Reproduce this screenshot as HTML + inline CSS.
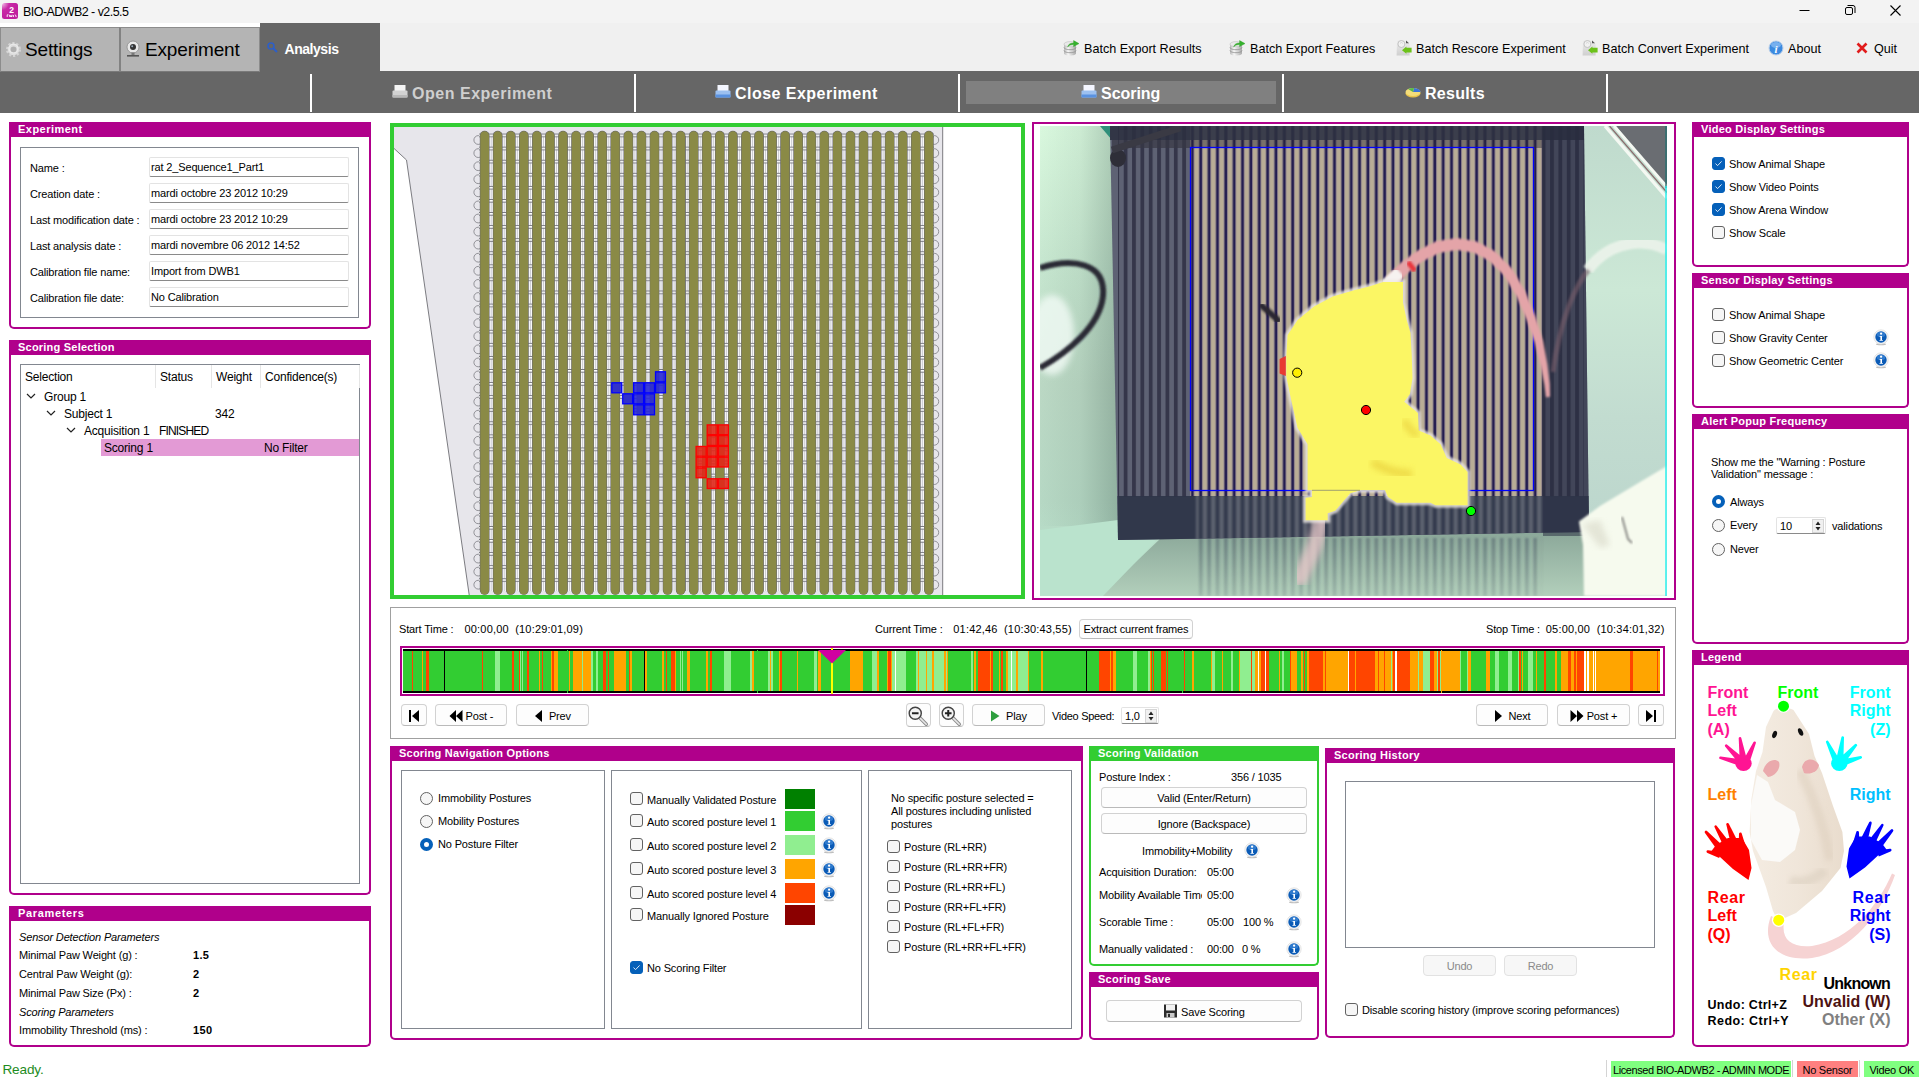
<!DOCTYPE html><html><head><meta charset="utf-8"><title>BIO-ADWB2 - v2.5.5</title><style>
*{box-sizing:border-box;margin:0;padding:0}
html,body{width:1919px;height:1077px;overflow:hidden;background:#fff}
body{position:relative;font-family:"Liberation Sans",sans-serif;font-size:11px;color:#000;letter-spacing:-.15px}
svg text{letter-spacing:0}
.a{position:absolute}
.t{position:absolute;white-space:nowrap;line-height:14px;height:14px}
.pn{position:absolute;border:2px solid #b0008b;border-top:0;border-radius:0 0 5px 5px;background:#fff}
.ph{position:absolute;background:#b0008b;color:#fff;font-weight:bold;font-size:11px;line-height:14px;padding-left:9px;white-space:nowrap;letter-spacing:.26px}
.bx{position:absolute;border:1px solid #828790;background:#fff}
.fd{position:absolute;border:1px solid #e3e3e3;border-bottom-color:#8a8a8a;background:#fff;border-radius:2px;line-height:19px;padding-left:1px;white-space:nowrap}
.bt{position:absolute;border:1px solid #d2d2d2;border-bottom-color:#bababa;border-radius:4px;background:#fdfdfd;text-align:center;white-space:nowrap;padding-top:1px}
.cb{position:absolute;width:13px;height:13px;border:1px solid #626262;border-radius:3px;background:#f6f6f6}
.cb.on{background:#0560b9;border-color:#0560b9}
.rd{position:absolute;width:13px;height:13px;border:1px solid #626262;border-radius:50%;background:#f6f6f6}
.rd.on{border:4px solid #0560b9;background:#fff}
.b{font-weight:bold}.i{font-style:italic}
.tr{font-size:12px;line-height:16px;height:16px;letter-spacing:-.2px}
</style></head><body>
<div class="a" style="left:0;top:0;width:1919px;height:23px;background:#f3f3f3"></div>
<svg class="a" style="left:2px;top:3px" width="17" height="17" viewBox="0 0 17 17"><defs><radialGradient id="ai" cx="0" cy="0" r="1"><stop offset="0" stop-color="#f4c6ea"/><stop offset=".45" stop-color="#c92aa6"/><stop offset="1" stop-color="#c01f9f"/></radialGradient></defs><rect x="0" y="0" width="16" height="16" rx="2.5" fill="url(#ai)"/><text x="9.6" y="10" font-family="Liberation Sans,sans-serif" font-weight="bold" font-size="8.5" fill="#fff" text-anchor="middle">2</text><path d="M5.2 14V11.8H6.4M7.4 11.8L8 14L8.8 12.4L9.6 14L10.2 11.8M11.4 14V12M12.8 11.8L14 12.6V14" stroke="#fff" stroke-width=".9" fill="none"/></svg>
<div class="t " style="left:23px;top:4.5px;font-size:12.5px;line-height:14px;letter-spacing:-.55px">BIO-ADWB2 - v2.5.5</div>
<svg class="a" style="left:1780px;top:0" width="139" height="23" viewBox="0 0 139 23"><path d="M19.5 10.5h10" stroke="#000" stroke-width="1"/><rect x="65.5" y="7.5" width="7" height="7" rx="1.5" fill="none" stroke="#000"/><path d="M67.5 5.5h5.5a2 2 0 0 1 2 2v5.5" fill="none" stroke="#000"/><path d="M110.5 5.5l10 10M120.5 5.5l-10 10" stroke="#000" stroke-width="1.1"/></svg>
<div class="a" style="left:0;top:23px;width:1919px;height:49px;background:#f0f0f0"></div>
<div class="a" style="left:0;top:71px;width:1919px;height:42px;background:#666"></div>
<div class="a" style="left:0;top:23px;width:260px;height:4px;background:#fff"></div>
<div class="a" style="left:0;top:27px;width:120px;height:45px;background:#b4b4b4;border:1px solid #8c8c8c;border-bottom-color:#7a7a7a"></div>
<div class="a" style="left:119px;top:27px;width:141px;height:45px;background:#b4b4b4;border:1px solid #8c8c8c;border-bottom-color:#7a7a7a;border-left-width:2px;border-left-color:#828282"></div>
<div class="a" style="left:260px;top:23px;width:120px;height:50px;background:#666"></div>
<svg class="a" style="left:4.5px;top:41px" width="17" height="17" viewBox="0 0 17 17"><circle cx="8.5" cy="8.5" r="6" fill="none" stroke="#d4d4d4" stroke-width="3" stroke-dasharray="2.1 1.67"/><circle cx="8.5" cy="8.5" r="4.4" fill="none" stroke="#dedede" stroke-width="2.8"/><circle cx="8.5" cy="7.6" r="4.4" fill="none" stroke="#ececec" stroke-width="1.2" opacity=".8"/><circle cx="8.5" cy="8.5" r="2.5" fill="#b0b0b0"/></svg>
<div class="t " style="left:25px;top:43.5px;font-size:19px;line-height:24px;height:24px;top:38px">Settings</div>
<svg class="a" style="left:125px;top:40px" width="16" height="18" viewBox="0 0 16 18"><circle cx="8" cy="7" r="6" fill="#e8e8e8" stroke="#8a8a8a" stroke-width=".8"/><circle cx="8" cy="7" r="3" fill="#333"/><circle cx="7.2" cy="6.2" r="1" fill="#9ab"/><rect x="6.5" y="12.5" width="3" height="2.5" fill="#777"/><rect x="2" y="15" width="12" height="1.6" fill="#555"/></svg>
<div class="t " style="left:145px;top:43.5px;font-size:19px;line-height:24px;height:24px;top:38px">Experiment</div>
<svg class="a" style="left:266px;top:41px" width="13" height="13" viewBox="0 0 13 13"><circle cx="5" cy="5" r="3" fill="none" stroke="#2d5fc8" stroke-width="1.6"/><path d="M7.2 7.2L11 11" stroke="#2d5fc8" stroke-width="2"/></svg>
<div class="t b" style="left:284.5px;top:42px;font-size:14px;color:#fff;line-height:18px;height:18px;top:40px;letter-spacing:-.45px">Analysis</div>
<svg class="a" style="left:1063px;top:40px" width="17" height="16" viewBox="0 0 17 16"><defs><linearGradient id="cyl" x1="0" y1="0" x2="1" y2="0"><stop offset="0" stop-color="#b9b9b9"/><stop offset=".35" stop-color="#f6f6f6"/><stop offset="1" stop-color="#a9a9a9"/></linearGradient></defs><path d="M1 4.2v9c0 1.3 2.6 2.3 6 2.3s6-1 6-2.3v-9" fill="url(#cyl)"/><ellipse cx="7" cy="4.2" rx="6" ry="2.6" fill="#e9e9e9" stroke="#b5b5b5" stroke-width=".5"/><path d="M1 7.4c0 1.3 2.6 2.3 6 2.3s6-1 6-2.3M1 10.4c0 1.3 2.6 2.3 6 2.3s6-1 6-2.3" fill="none" stroke="#8f8f8f" stroke-width=".8"/><path d="M4.6 7C5.2 4.4 7.4 3 10.6 3V0.6L16 3.6L10.6 6.6V4.6C8 4.6 6.2 5.4 4.6 7z" fill="#35b22d" stroke="#2a9a24" stroke-width=".4"/></svg>
<div class="t " style="left:1084px;top:41.5px;font-size:12.6px;letter-spacing:0">Batch Export Results</div>
<svg class="a" style="left:1229px;top:40px" width="17" height="16" viewBox="0 0 17 16"><path d="M1 4.2v9c0 1.3 2.6 2.3 6 2.3s6-1 6-2.3v-9" fill="url(#cyl)"/><ellipse cx="7" cy="4.2" rx="6" ry="2.6" fill="#e9e9e9" stroke="#b5b5b5" stroke-width=".5"/><path d="M1 7.4c0 1.3 2.6 2.3 6 2.3s6-1 6-2.3M1 10.4c0 1.3 2.6 2.3 6 2.3s6-1 6-2.3" fill="none" stroke="#8f8f8f" stroke-width=".8"/><path d="M4.6 7C5.2 4.4 7.4 3 10.6 3V0.6L16 3.6L10.6 6.6V4.6C8 4.6 6.2 5.4 4.6 7z" fill="#35b22d" stroke="#2a9a24" stroke-width=".4"/></svg>
<div class="t " style="left:1250px;top:41.5px;font-size:12.6px;letter-spacing:0">Batch Export Features</div>
<svg class="a" style="left:1396px;top:40px" width="16" height="16" viewBox="0 0 16 16"><defs><linearGradient id="doc" x1="0" y1="0" x2="0" y2="1"><stop offset="0" stop-color="#ededed"/><stop offset="1" stop-color="#cfcfcf"/></linearGradient></defs><path d="M1 0.6H10.2L13.6 4V15.6H0.6z" fill="url(#doc)"/><path d="M10 0.4L13 3.2H10z" fill="#555"/><circle cx="5.4" cy="4" r="3.5" fill="#f1f1f1" stroke="#bdbdbd" stroke-width=".9"/><path d="M4 3.4L5.4 2.4L6.8 3.4" stroke="#c9c9c9" stroke-width=".7" fill="none"/><path d="M15.6 7.7H10.4V6.6L6 10.3L10.4 13.8V12.4H15.6z" fill="#6cc21a"/></svg>
<div class="t " style="left:1416px;top:41.5px;font-size:12.6px;letter-spacing:0">Batch Rescore Experiment</div>
<svg class="a" style="left:1582px;top:40px" width="16" height="16" viewBox="0 0 16 16"><path d="M1 0.6H10.2L13.6 4V15.6H0.6z" fill="url(#doc)"/><path d="M10 0.4L13 3.2H10z" fill="#555"/><circle cx="5.4" cy="4" r="3.5" fill="#f1f1f1" stroke="#bdbdbd" stroke-width=".9"/><path d="M4 3.4L5.4 2.4L6.8 3.4" stroke="#c9c9c9" stroke-width=".7" fill="none"/><path d="M15.6 7.7H10.4V6.6L6 10.3L10.4 13.8V12.4H15.6z" fill="#6cc21a"/></svg>
<div class="t " style="left:1602px;top:41.5px;font-size:12.6px;letter-spacing:0">Batch Convert Experiment</div>
<svg class="a" style="left:1768px;top:40px" width="16" height="16" viewBox="0 0 16 16"><circle cx="8" cy="8" r="7" fill="#3c8ae0" stroke="#b9cfea" stroke-width="1"/><ellipse cx="8" cy="5" rx="5" ry="3" fill="#8fc0f5" opacity=".7"/><text x="8" y="12.5" font-family="Liberation Serif,serif" font-style="italic" font-weight="bold" font-size="11" fill="#fff" text-anchor="middle">i</text></svg>
<div class="t " style="left:1788px;top:41.5px;font-size:12.6px;letter-spacing:0">About</div>
<svg class="a" style="left:1856px;top:42px" width="12" height="12" viewBox="0 0 12 12"><path d="M1.5 1.5l9 9M10.5 1.5l-9 9" stroke="#e11b1b" stroke-width="2.6"/></svg>
<div class="t " style="left:1874px;top:41.5px;font-size:12.6px;letter-spacing:0">Quit</div>
<div class="a" style="left:310px;top:74px;width:2px;height:38px;background:#fff"></div>
<div class="a" style="left:634px;top:74px;width:2px;height:38px;background:#fff"></div>
<div class="a" style="left:958px;top:74px;width:2px;height:38px;background:#fff"></div>
<div class="a" style="left:1282px;top:74px;width:2px;height:38px;background:#fff"></div>
<div class="a" style="left:1606px;top:74px;width:2px;height:38px;background:#fff"></div>
<div class="a" style="left:966px;top:81px;width:310px;height:23px;background:#808080"></div>
<svg class="a" style="left:392px;top:85px" width="16" height="14" viewBox="0 0 16 14"><rect x="2.5" y="0" width="11" height="7" fill="#f4f4f4"/><rect x="0.5" y="5.5" width="15" height="7" rx="1" fill="#d2d2d2"/><rect x="0.5" y="10" width="15" height="2.5" fill="#b8b8b8"/></svg>
<div class="t" style="left:412px;top:82px;font-weight:bold;font-size:16px;line-height:24px;height:24px;color:#cfcfcf;letter-spacing:.52px">Open Experiment</div>
<svg class="a" style="left:715px;top:85px" width="16" height="14" viewBox="0 0 16 14"><rect x="2.5" y="0" width="11" height="7" fill="#f4f6ff"/><rect x="0.5" y="5.5" width="15" height="7" rx="1" fill="#9cc0f0"/><rect x="0.5" y="9.5" width="15" height="3" fill="#5a92e0"/></svg>
<div class="t" style="left:735px;top:82px;font-weight:bold;font-size:16px;line-height:24px;height:24px;color:#fff;letter-spacing:.47px">Close Experiment</div>
<svg class="a" style="left:1081px;top:85px" width="16" height="14" viewBox="0 0 16 14"><rect x="2.5" y="0" width="11" height="7" fill="#f4f6ff"/><rect x="0.5" y="5.5" width="15" height="7" rx="1" fill="#9cc0f0"/><rect x="0.5" y="9.5" width="15" height="3" fill="#5a92e0"/></svg>
<div class="t" style="left:1101px;top:82px;font-weight:bold;font-size:16px;line-height:24px;height:24px;color:#fff;letter-spacing:-.03px">Scoring</div>
<svg class="a" style="left:1405px;top:87px" width="16" height="12" viewBox="0 0 16 12"><ellipse cx="8" cy="6.5" rx="7.5" ry="4" fill="#e8c24a"/><ellipse cx="8" cy="5" rx="7.5" ry="4" fill="#f4dd7a"/><path d="M8 5L15.5 5A7.5 4 0 0 0 9 1z" fill="#3d74d8"/><path d="M8 5L9 1A7.5 4 0 0 0 3 2z" fill="#58b84a"/></svg>
<div class="t" style="left:1425px;top:82px;font-weight:bold;font-size:16px;line-height:24px;height:24px;color:#fff;letter-spacing:.3px">Results</div>
<div class="pn" style="left:9px;top:122px;width:362px;height:207px;border-color:#b0008b"></div>
<div class="ph" style="left:9px;top:122px;width:362px;height:15px;background:#b0008b;letter-spacing:0.48px">Experiment</div>
<div class="bx" style="left:20px;top:147px;width:339px;height:171px;"></div>
<div class="t " style="left:30px;top:161px;">Name :</div>
<div class="fd" style="left:149px;top:157px;width:200px;height:20px">rat 2_Sequence1_Part1</div>
<div class="t " style="left:30px;top:187px;">Creation date :</div>
<div class="fd" style="left:149px;top:183px;width:200px;height:20px">mardi octobre 23 2012 10:29</div>
<div class="t " style="left:30px;top:213px;">Last modification date :</div>
<div class="fd" style="left:149px;top:209px;width:200px;height:20px">mardi octobre 23 2012 10:29</div>
<div class="t " style="left:30px;top:239px;">Last analysis date :</div>
<div class="fd" style="left:149px;top:235px;width:200px;height:20px">mardi novembre 06 2012 14:52</div>
<div class="t " style="left:30px;top:265px;">Calibration file name:</div>
<div class="fd" style="left:149px;top:261px;width:200px;height:20px">Import from DWB1</div>
<div class="t " style="left:30px;top:291px;">Calibration file date:</div>
<div class="fd" style="left:149px;top:287px;width:200px;height:20px">No Calibration</div>
<div class="pn" style="left:9px;top:340px;width:362px;height:555px;border-color:#b0008b"></div>
<div class="ph" style="left:9px;top:340px;width:362px;height:15px;background:#b0008b;letter-spacing:0.22px">Scoring Selection</div>
<div class="bx" style="left:20px;top:364px;width:340px;height:520px;"></div>
<div class="a" style="left:155px;top:365px;width:1px;height:23px;background:#e5e5e5"></div>
<div class="a" style="left:211px;top:365px;width:1px;height:23px;background:#e5e5e5"></div>
<div class="a" style="left:260px;top:365px;width:1px;height:23px;background:#e5e5e5"></div>
<div class="a" style="left:359px;top:365px;width:1px;height:23px;background:#e5e5e5"></div>
<div class="t tr" style="left:25px;top:370px;top:369px">Selection</div>
<div class="t tr" style="left:160px;top:370px;top:369px">Status</div>
<div class="t tr" style="left:216px;top:370px;top:369px">Weight</div>
<div class="t tr" style="left:265px;top:370px;top:369px">Confidence(s)</div>
<svg class="a" style="left:26px;top:393px" width="10" height="7" viewBox="0 0 10 7"><path d="M1 1l4 4l4-4" fill="none" stroke="#222" stroke-width="1.2"/></svg>
<div class="t tr" style="left:44px;top:390px;top:389px">Group 1</div>
<svg class="a" style="left:46px;top:410px" width="10" height="7" viewBox="0 0 10 7"><path d="M1 1l4 4l4-4" fill="none" stroke="#222" stroke-width="1.2"/></svg>
<div class="t tr" style="left:64px;top:407px;top:406px">Subject 1</div>
<div class="t tr" style="left:215px;top:407px;top:406px">342</div>
<svg class="a" style="left:66px;top:427px" width="10" height="7" viewBox="0 0 10 7"><path d="M1 1l4 4l4-4" fill="none" stroke="#222" stroke-width="1.2"/></svg>
<div class="t tr" style="left:84px;top:424px;top:423px">Acquisition 1</div>
<div class="t tr" style="left:159px;top:424px;top:423px;letter-spacing:-.85px">FINISHED</div>
<div class="a" style="left:101px;top:439px;width:258px;height:17px;background:#e39ad5"></div>
<div class="t tr" style="left:104px;top:441px;top:440px">Scoring 1</div>
<div class="t tr" style="left:264px;top:441px;top:440px">No Filter</div>
<div class="pn" style="left:9px;top:906px;width:362px;height:141px;border-color:#b0008b"></div>
<div class="ph" style="left:9px;top:906px;width:362px;height:15px;background:#b0008b;letter-spacing:0.66px">Parameters</div>
<div class="t i" style="left:19px;top:930px;">Sensor Detection Parameters</div>
<div class="t " style="left:19px;top:948px;">Minimal Paw Weight (g) :</div>
<div class="t b" style="left:193px;top:948px;letter-spacing:.35px">1.5</div>
<div class="t " style="left:19px;top:967px;">Central Paw Weight (g):</div>
<div class="t b" style="left:193px;top:967px;">2</div>
<div class="t " style="left:19px;top:986px;">Minimal Paw Size (Px) :</div>
<div class="t b" style="left:193px;top:986px;">2</div>
<div class="t i" style="left:19px;top:1005px;">Scoring Parameters</div>
<div class="t " style="left:19px;top:1023px;">Immobility Threshold (ms) :</div>
<div class="t b" style="left:193px;top:1023px;letter-spacing:.35px">150</div>
<div class="t " style="left:2.4px;top:1063px;font-size:13.6px;color:#1e8c1e;line-height:16px;height:16px;top:1062px">Ready.</div>
<div class="a" style="left:1606px;top:1060px;width:1px;height:17px;background:#d4d4d4"></div>
<div class="a" style="left:1792px;top:1060px;width:1px;height:17px;background:#d4d4d4"></div>
<div class="a" style="left:1859px;top:1060px;width:1px;height:17px;background:#d4d4d4"></div>
<div class="a" style="left:1611px;top:1061px;width:180px;height:16px;background:#80ff80;line-height:18px;padding-left:2px;white-space:nowrap;letter-spacing:-.43px">Licensed BIO-ADWB2 - ADMIN MODE</div>
<div class="a" style="left:1797px;top:1061px;width:61px;height:16px;background:#ff8080;line-height:18px;padding-left:5.5px;white-space:nowrap;letter-spacing:-.25px">No Sensor</div>
<div class="a" style="left:1864px;top:1061px;width:55px;height:16px;background:#80ff80;line-height:18px;padding-left:5.5px;white-space:nowrap;letter-spacing:-.3px">Video OK</div>
<div class="a" style="left:390px;top:123px;width:635px;height:476px;border:4px solid #32cd32;background:#fff"></div>
<svg class="a" style="left:394px;top:127px" width="627" height="468" viewBox="394 127 627 468"><defs><pattern id="hl" x="0" y="133.6" width="13" height="13.08" patternUnits="userSpaceOnUse"><rect x="0" y="0" width="13" height=".9" fill="#6c6c74"/><rect x="0" y=".9" width="13" height="1.7" fill="#fff"/><rect x="0" y="2.6" width="13" height=".9" fill="#6c6c74"/></pattern></defs><path d="M390 126H942.7V597H469.5L406.5 160L393 147.5z" fill="#e7e6eb" stroke="#6e6e74" stroke-width=".9"/><circle cx="478.3" cy="140.0" r="4.4" fill="#e7e6eb" stroke="#6e6e74" stroke-width=".7"/><circle cx="934.3" cy="140.0" r="4.4" fill="#e7e6eb" stroke="#6e6e74" stroke-width=".7"/><circle cx="478.3" cy="153.1" r="4.4" fill="#e7e6eb" stroke="#6e6e74" stroke-width=".7"/><circle cx="934.3" cy="153.1" r="4.4" fill="#e7e6eb" stroke="#6e6e74" stroke-width=".7"/><circle cx="478.3" cy="166.2" r="4.4" fill="#e7e6eb" stroke="#6e6e74" stroke-width=".7"/><circle cx="934.3" cy="166.2" r="4.4" fill="#e7e6eb" stroke="#6e6e74" stroke-width=".7"/><circle cx="478.3" cy="179.2" r="4.4" fill="#e7e6eb" stroke="#6e6e74" stroke-width=".7"/><circle cx="934.3" cy="179.2" r="4.4" fill="#e7e6eb" stroke="#6e6e74" stroke-width=".7"/><circle cx="478.3" cy="192.3" r="4.4" fill="#e7e6eb" stroke="#6e6e74" stroke-width=".7"/><circle cx="934.3" cy="192.3" r="4.4" fill="#e7e6eb" stroke="#6e6e74" stroke-width=".7"/><circle cx="478.3" cy="205.4" r="4.4" fill="#e7e6eb" stroke="#6e6e74" stroke-width=".7"/><circle cx="934.3" cy="205.4" r="4.4" fill="#e7e6eb" stroke="#6e6e74" stroke-width=".7"/><circle cx="478.3" cy="218.5" r="4.4" fill="#e7e6eb" stroke="#6e6e74" stroke-width=".7"/><circle cx="934.3" cy="218.5" r="4.4" fill="#e7e6eb" stroke="#6e6e74" stroke-width=".7"/><circle cx="478.3" cy="231.6" r="4.4" fill="#e7e6eb" stroke="#6e6e74" stroke-width=".7"/><circle cx="934.3" cy="231.6" r="4.4" fill="#e7e6eb" stroke="#6e6e74" stroke-width=".7"/><circle cx="478.3" cy="244.6" r="4.4" fill="#e7e6eb" stroke="#6e6e74" stroke-width=".7"/><circle cx="934.3" cy="244.6" r="4.4" fill="#e7e6eb" stroke="#6e6e74" stroke-width=".7"/><circle cx="478.3" cy="257.7" r="4.4" fill="#e7e6eb" stroke="#6e6e74" stroke-width=".7"/><circle cx="934.3" cy="257.7" r="4.4" fill="#e7e6eb" stroke="#6e6e74" stroke-width=".7"/><circle cx="478.3" cy="270.8" r="4.4" fill="#e7e6eb" stroke="#6e6e74" stroke-width=".7"/><circle cx="934.3" cy="270.8" r="4.4" fill="#e7e6eb" stroke="#6e6e74" stroke-width=".7"/><circle cx="478.3" cy="283.9" r="4.4" fill="#e7e6eb" stroke="#6e6e74" stroke-width=".7"/><circle cx="934.3" cy="283.9" r="4.4" fill="#e7e6eb" stroke="#6e6e74" stroke-width=".7"/><circle cx="478.3" cy="297.0" r="4.4" fill="#e7e6eb" stroke="#6e6e74" stroke-width=".7"/><circle cx="934.3" cy="297.0" r="4.4" fill="#e7e6eb" stroke="#6e6e74" stroke-width=".7"/><circle cx="478.3" cy="310.0" r="4.4" fill="#e7e6eb" stroke="#6e6e74" stroke-width=".7"/><circle cx="934.3" cy="310.0" r="4.4" fill="#e7e6eb" stroke="#6e6e74" stroke-width=".7"/><circle cx="478.3" cy="323.1" r="4.4" fill="#e7e6eb" stroke="#6e6e74" stroke-width=".7"/><circle cx="934.3" cy="323.1" r="4.4" fill="#e7e6eb" stroke="#6e6e74" stroke-width=".7"/><circle cx="478.3" cy="336.2" r="4.4" fill="#e7e6eb" stroke="#6e6e74" stroke-width=".7"/><circle cx="934.3" cy="336.2" r="4.4" fill="#e7e6eb" stroke="#6e6e74" stroke-width=".7"/><circle cx="478.3" cy="349.3" r="4.4" fill="#e7e6eb" stroke="#6e6e74" stroke-width=".7"/><circle cx="934.3" cy="349.3" r="4.4" fill="#e7e6eb" stroke="#6e6e74" stroke-width=".7"/><circle cx="478.3" cy="362.4" r="4.4" fill="#e7e6eb" stroke="#6e6e74" stroke-width=".7"/><circle cx="934.3" cy="362.4" r="4.4" fill="#e7e6eb" stroke="#6e6e74" stroke-width=".7"/><circle cx="478.3" cy="375.4" r="4.4" fill="#e7e6eb" stroke="#6e6e74" stroke-width=".7"/><circle cx="934.3" cy="375.4" r="4.4" fill="#e7e6eb" stroke="#6e6e74" stroke-width=".7"/><circle cx="478.3" cy="388.5" r="4.4" fill="#e7e6eb" stroke="#6e6e74" stroke-width=".7"/><circle cx="934.3" cy="388.5" r="4.4" fill="#e7e6eb" stroke="#6e6e74" stroke-width=".7"/><circle cx="478.3" cy="401.6" r="4.4" fill="#e7e6eb" stroke="#6e6e74" stroke-width=".7"/><circle cx="934.3" cy="401.6" r="4.4" fill="#e7e6eb" stroke="#6e6e74" stroke-width=".7"/><circle cx="478.3" cy="414.7" r="4.4" fill="#e7e6eb" stroke="#6e6e74" stroke-width=".7"/><circle cx="934.3" cy="414.7" r="4.4" fill="#e7e6eb" stroke="#6e6e74" stroke-width=".7"/><circle cx="478.3" cy="427.8" r="4.4" fill="#e7e6eb" stroke="#6e6e74" stroke-width=".7"/><circle cx="934.3" cy="427.8" r="4.4" fill="#e7e6eb" stroke="#6e6e74" stroke-width=".7"/><circle cx="478.3" cy="440.8" r="4.4" fill="#e7e6eb" stroke="#6e6e74" stroke-width=".7"/><circle cx="934.3" cy="440.8" r="4.4" fill="#e7e6eb" stroke="#6e6e74" stroke-width=".7"/><circle cx="478.3" cy="453.9" r="4.4" fill="#e7e6eb" stroke="#6e6e74" stroke-width=".7"/><circle cx="934.3" cy="453.9" r="4.4" fill="#e7e6eb" stroke="#6e6e74" stroke-width=".7"/><circle cx="478.3" cy="467.0" r="4.4" fill="#e7e6eb" stroke="#6e6e74" stroke-width=".7"/><circle cx="934.3" cy="467.0" r="4.4" fill="#e7e6eb" stroke="#6e6e74" stroke-width=".7"/><circle cx="478.3" cy="480.1" r="4.4" fill="#e7e6eb" stroke="#6e6e74" stroke-width=".7"/><circle cx="934.3" cy="480.1" r="4.4" fill="#e7e6eb" stroke="#6e6e74" stroke-width=".7"/><circle cx="478.3" cy="493.2" r="4.4" fill="#e7e6eb" stroke="#6e6e74" stroke-width=".7"/><circle cx="934.3" cy="493.2" r="4.4" fill="#e7e6eb" stroke="#6e6e74" stroke-width=".7"/><circle cx="478.3" cy="506.2" r="4.4" fill="#e7e6eb" stroke="#6e6e74" stroke-width=".7"/><circle cx="934.3" cy="506.2" r="4.4" fill="#e7e6eb" stroke="#6e6e74" stroke-width=".7"/><circle cx="478.3" cy="519.3" r="4.4" fill="#e7e6eb" stroke="#6e6e74" stroke-width=".7"/><circle cx="934.3" cy="519.3" r="4.4" fill="#e7e6eb" stroke="#6e6e74" stroke-width=".7"/><circle cx="478.3" cy="532.4" r="4.4" fill="#e7e6eb" stroke="#6e6e74" stroke-width=".7"/><circle cx="934.3" cy="532.4" r="4.4" fill="#e7e6eb" stroke="#6e6e74" stroke-width=".7"/><circle cx="478.3" cy="545.5" r="4.4" fill="#e7e6eb" stroke="#6e6e74" stroke-width=".7"/><circle cx="934.3" cy="545.5" r="4.4" fill="#e7e6eb" stroke="#6e6e74" stroke-width=".7"/><circle cx="478.3" cy="558.6" r="4.4" fill="#e7e6eb" stroke="#6e6e74" stroke-width=".7"/><circle cx="934.3" cy="558.6" r="4.4" fill="#e7e6eb" stroke="#6e6e74" stroke-width=".7"/><circle cx="478.3" cy="571.6" r="4.4" fill="#e7e6eb" stroke="#6e6e74" stroke-width=".7"/><circle cx="934.3" cy="571.6" r="4.4" fill="#e7e6eb" stroke="#6e6e74" stroke-width=".7"/><circle cx="478.3" cy="584.7" r="4.4" fill="#e7e6eb" stroke="#6e6e74" stroke-width=".7"/><circle cx="934.3" cy="584.7" r="4.4" fill="#e7e6eb" stroke="#6e6e74" stroke-width=".7"/><rect x="489.40" y="136" width="3.56" height="455" fill="#fdfdfe" opacity=".75"/><rect x="490.75" y="136" width=".85" height="455" fill="#c4c4cc"/><rect x="502.46" y="136" width="3.56" height="455" fill="#fdfdfe" opacity=".75"/><rect x="503.81" y="136" width=".85" height="455" fill="#c4c4cc"/><rect x="515.53" y="136" width="3.56" height="455" fill="#fdfdfe" opacity=".75"/><rect x="516.88" y="136" width=".85" height="455" fill="#c4c4cc"/><rect x="528.60" y="136" width="3.56" height="455" fill="#fdfdfe" opacity=".75"/><rect x="529.95" y="136" width=".85" height="455" fill="#c4c4cc"/><rect x="541.66" y="136" width="3.56" height="455" fill="#fdfdfe" opacity=".75"/><rect x="543.01" y="136" width=".85" height="455" fill="#c4c4cc"/><rect x="554.73" y="136" width="3.56" height="455" fill="#fdfdfe" opacity=".75"/><rect x="556.08" y="136" width=".85" height="455" fill="#c4c4cc"/><rect x="567.79" y="136" width="3.56" height="455" fill="#fdfdfe" opacity=".75"/><rect x="569.14" y="136" width=".85" height="455" fill="#c4c4cc"/><rect x="580.86" y="136" width="3.56" height="455" fill="#fdfdfe" opacity=".75"/><rect x="582.21" y="136" width=".85" height="455" fill="#c4c4cc"/><rect x="593.92" y="136" width="3.56" height="455" fill="#fdfdfe" opacity=".75"/><rect x="595.27" y="136" width=".85" height="455" fill="#c4c4cc"/><rect x="606.99" y="136" width="3.56" height="455" fill="#fdfdfe" opacity=".75"/><rect x="608.34" y="136" width=".85" height="455" fill="#c4c4cc"/><rect x="620.05" y="136" width="3.56" height="455" fill="#fdfdfe" opacity=".75"/><rect x="621.40" y="136" width=".85" height="455" fill="#c4c4cc"/><rect x="633.12" y="136" width="3.56" height="455" fill="#fdfdfe" opacity=".75"/><rect x="634.47" y="136" width=".85" height="455" fill="#c4c4cc"/><rect x="646.18" y="136" width="3.56" height="455" fill="#fdfdfe" opacity=".75"/><rect x="647.53" y="136" width=".85" height="455" fill="#c4c4cc"/><rect x="659.25" y="136" width="3.56" height="455" fill="#fdfdfe" opacity=".75"/><rect x="660.60" y="136" width=".85" height="455" fill="#c4c4cc"/><rect x="672.31" y="136" width="3.56" height="455" fill="#fdfdfe" opacity=".75"/><rect x="673.66" y="136" width=".85" height="455" fill="#c4c4cc"/><rect x="685.38" y="136" width="3.56" height="455" fill="#fdfdfe" opacity=".75"/><rect x="686.73" y="136" width=".85" height="455" fill="#c4c4cc"/><rect x="698.44" y="136" width="3.56" height="455" fill="#fdfdfe" opacity=".75"/><rect x="699.79" y="136" width=".85" height="455" fill="#c4c4cc"/><rect x="711.50" y="136" width="3.56" height="455" fill="#fdfdfe" opacity=".75"/><rect x="712.86" y="136" width=".85" height="455" fill="#c4c4cc"/><rect x="724.57" y="136" width="3.56" height="455" fill="#fdfdfe" opacity=".75"/><rect x="725.92" y="136" width=".85" height="455" fill="#c4c4cc"/><rect x="737.63" y="136" width="3.56" height="455" fill="#fdfdfe" opacity=".75"/><rect x="738.99" y="136" width=".85" height="455" fill="#c4c4cc"/><rect x="750.70" y="136" width="3.56" height="455" fill="#fdfdfe" opacity=".75"/><rect x="752.05" y="136" width=".85" height="455" fill="#c4c4cc"/><rect x="763.76" y="136" width="3.56" height="455" fill="#fdfdfe" opacity=".75"/><rect x="765.12" y="136" width=".85" height="455" fill="#c4c4cc"/><rect x="776.83" y="136" width="3.56" height="455" fill="#fdfdfe" opacity=".75"/><rect x="778.18" y="136" width=".85" height="455" fill="#c4c4cc"/><rect x="789.89" y="136" width="3.56" height="455" fill="#fdfdfe" opacity=".75"/><rect x="791.25" y="136" width=".85" height="455" fill="#c4c4cc"/><rect x="802.96" y="136" width="3.56" height="455" fill="#fdfdfe" opacity=".75"/><rect x="804.31" y="136" width=".85" height="455" fill="#c4c4cc"/><rect x="816.02" y="136" width="3.56" height="455" fill="#fdfdfe" opacity=".75"/><rect x="817.38" y="136" width=".85" height="455" fill="#c4c4cc"/><rect x="829.09" y="136" width="3.56" height="455" fill="#fdfdfe" opacity=".75"/><rect x="830.44" y="136" width=".85" height="455" fill="#c4c4cc"/><rect x="842.15" y="136" width="3.56" height="455" fill="#fdfdfe" opacity=".75"/><rect x="843.50" y="136" width=".85" height="455" fill="#c4c4cc"/><rect x="855.22" y="136" width="3.56" height="455" fill="#fdfdfe" opacity=".75"/><rect x="856.57" y="136" width=".85" height="455" fill="#c4c4cc"/><rect x="868.28" y="136" width="3.56" height="455" fill="#fdfdfe" opacity=".75"/><rect x="869.63" y="136" width=".85" height="455" fill="#c4c4cc"/><rect x="881.35" y="136" width="3.56" height="455" fill="#fdfdfe" opacity=".75"/><rect x="882.70" y="136" width=".85" height="455" fill="#c4c4cc"/><rect x="894.41" y="136" width="3.56" height="455" fill="#fdfdfe" opacity=".75"/><rect x="895.76" y="136" width=".85" height="455" fill="#c4c4cc"/><rect x="907.48" y="136" width="3.56" height="455" fill="#fdfdfe" opacity=".75"/><rect x="908.83" y="136" width=".85" height="455" fill="#c4c4cc"/><rect x="920.54" y="136" width="3.56" height="455" fill="#fdfdfe" opacity=".75"/><rect x="921.89" y="136" width=".85" height="455" fill="#c4c4cc"/><rect x="479" y="133" width="455" height="458" fill="url(#hl)"/><rect x="479.80" y="130.8" width="9.7" height="464" rx="4.85" fill="#66666e"/><rect x="480.30" y="131.2" width="8.7" height="463.2" rx="4.35" fill="#8a8a46"/><rect x="492.86" y="130.8" width="9.7" height="464" rx="4.85" fill="#66666e"/><rect x="493.36" y="131.2" width="8.7" height="463.2" rx="4.35" fill="#8a8a46"/><rect x="505.93" y="130.8" width="9.7" height="464" rx="4.85" fill="#66666e"/><rect x="506.43" y="131.2" width="8.7" height="463.2" rx="4.35" fill="#8a8a46"/><rect x="519.00" y="130.8" width="9.7" height="464" rx="4.85" fill="#66666e"/><rect x="519.50" y="131.2" width="8.7" height="463.2" rx="4.35" fill="#8a8a46"/><rect x="532.06" y="130.8" width="9.7" height="464" rx="4.85" fill="#66666e"/><rect x="532.56" y="131.2" width="8.7" height="463.2" rx="4.35" fill="#8a8a46"/><rect x="545.12" y="130.8" width="9.7" height="464" rx="4.85" fill="#66666e"/><rect x="545.62" y="131.2" width="8.7" height="463.2" rx="4.35" fill="#8a8a46"/><rect x="558.19" y="130.8" width="9.7" height="464" rx="4.85" fill="#66666e"/><rect x="558.69" y="131.2" width="8.7" height="463.2" rx="4.35" fill="#8a8a46"/><rect x="571.25" y="130.8" width="9.7" height="464" rx="4.85" fill="#66666e"/><rect x="571.75" y="131.2" width="8.7" height="463.2" rx="4.35" fill="#8a8a46"/><rect x="584.32" y="130.8" width="9.7" height="464" rx="4.85" fill="#66666e"/><rect x="584.82" y="131.2" width="8.7" height="463.2" rx="4.35" fill="#8a8a46"/><rect x="597.38" y="130.8" width="9.7" height="464" rx="4.85" fill="#66666e"/><rect x="597.88" y="131.2" width="8.7" height="463.2" rx="4.35" fill="#8a8a46"/><rect x="610.45" y="130.8" width="9.7" height="464" rx="4.85" fill="#66666e"/><rect x="610.95" y="131.2" width="8.7" height="463.2" rx="4.35" fill="#8a8a46"/><rect x="623.51" y="130.8" width="9.7" height="464" rx="4.85" fill="#66666e"/><rect x="624.01" y="131.2" width="8.7" height="463.2" rx="4.35" fill="#8a8a46"/><rect x="636.58" y="130.8" width="9.7" height="464" rx="4.85" fill="#66666e"/><rect x="637.08" y="131.2" width="8.7" height="463.2" rx="4.35" fill="#8a8a46"/><rect x="649.64" y="130.8" width="9.7" height="464" rx="4.85" fill="#66666e"/><rect x="650.14" y="131.2" width="8.7" height="463.2" rx="4.35" fill="#8a8a46"/><rect x="662.71" y="130.8" width="9.7" height="464" rx="4.85" fill="#66666e"/><rect x="663.21" y="131.2" width="8.7" height="463.2" rx="4.35" fill="#8a8a46"/><rect x="675.77" y="130.8" width="9.7" height="464" rx="4.85" fill="#66666e"/><rect x="676.27" y="131.2" width="8.7" height="463.2" rx="4.35" fill="#8a8a46"/><rect x="688.84" y="130.8" width="9.7" height="464" rx="4.85" fill="#66666e"/><rect x="689.34" y="131.2" width="8.7" height="463.2" rx="4.35" fill="#8a8a46"/><rect x="701.90" y="130.8" width="9.7" height="464" rx="4.85" fill="#66666e"/><rect x="702.40" y="131.2" width="8.7" height="463.2" rx="4.35" fill="#8a8a46"/><rect x="714.97" y="130.8" width="9.7" height="464" rx="4.85" fill="#66666e"/><rect x="715.47" y="131.2" width="8.7" height="463.2" rx="4.35" fill="#8a8a46"/><rect x="728.03" y="130.8" width="9.7" height="464" rx="4.85" fill="#66666e"/><rect x="728.53" y="131.2" width="8.7" height="463.2" rx="4.35" fill="#8a8a46"/><rect x="741.10" y="130.8" width="9.7" height="464" rx="4.85" fill="#66666e"/><rect x="741.60" y="131.2" width="8.7" height="463.2" rx="4.35" fill="#8a8a46"/><rect x="754.16" y="130.8" width="9.7" height="464" rx="4.85" fill="#66666e"/><rect x="754.66" y="131.2" width="8.7" height="463.2" rx="4.35" fill="#8a8a46"/><rect x="767.23" y="130.8" width="9.7" height="464" rx="4.85" fill="#66666e"/><rect x="767.73" y="131.2" width="8.7" height="463.2" rx="4.35" fill="#8a8a46"/><rect x="780.29" y="130.8" width="9.7" height="464" rx="4.85" fill="#66666e"/><rect x="780.79" y="131.2" width="8.7" height="463.2" rx="4.35" fill="#8a8a46"/><rect x="793.36" y="130.8" width="9.7" height="464" rx="4.85" fill="#66666e"/><rect x="793.86" y="131.2" width="8.7" height="463.2" rx="4.35" fill="#8a8a46"/><rect x="806.42" y="130.8" width="9.7" height="464" rx="4.85" fill="#66666e"/><rect x="806.92" y="131.2" width="8.7" height="463.2" rx="4.35" fill="#8a8a46"/><rect x="819.49" y="130.8" width="9.7" height="464" rx="4.85" fill="#66666e"/><rect x="819.99" y="131.2" width="8.7" height="463.2" rx="4.35" fill="#8a8a46"/><rect x="832.55" y="130.8" width="9.7" height="464" rx="4.85" fill="#66666e"/><rect x="833.05" y="131.2" width="8.7" height="463.2" rx="4.35" fill="#8a8a46"/><rect x="845.62" y="130.8" width="9.7" height="464" rx="4.85" fill="#66666e"/><rect x="846.12" y="131.2" width="8.7" height="463.2" rx="4.35" fill="#8a8a46"/><rect x="858.68" y="130.8" width="9.7" height="464" rx="4.85" fill="#66666e"/><rect x="859.18" y="131.2" width="8.7" height="463.2" rx="4.35" fill="#8a8a46"/><rect x="871.75" y="130.8" width="9.7" height="464" rx="4.85" fill="#66666e"/><rect x="872.25" y="131.2" width="8.7" height="463.2" rx="4.35" fill="#8a8a46"/><rect x="884.81" y="130.8" width="9.7" height="464" rx="4.85" fill="#66666e"/><rect x="885.31" y="131.2" width="8.7" height="463.2" rx="4.35" fill="#8a8a46"/><rect x="897.88" y="130.8" width="9.7" height="464" rx="4.85" fill="#66666e"/><rect x="898.38" y="131.2" width="8.7" height="463.2" rx="4.35" fill="#8a8a46"/><rect x="910.94" y="130.8" width="9.7" height="464" rx="4.85" fill="#66666e"/><rect x="911.44" y="131.2" width="8.7" height="463.2" rx="4.35" fill="#8a8a46"/><rect x="924.01" y="130.8" width="9.7" height="464" rx="4.85" fill="#66666e"/><rect x="924.51" y="131.2" width="8.7" height="463.2" rx="4.35" fill="#8a8a46"/><rect x="685" y="136" width=".8" height="455" fill="#70706c"/><rect x="655.52" y="371.80" width="9.93" height="10.00" fill="rgba(40,40,215,.9)" stroke="#0000ff" stroke-width="1.3"/><rect x="611.80" y="382.80" width="9.93" height="10.00" fill="rgba(40,40,215,.9)" stroke="#0000ff" stroke-width="1.3"/><rect x="633.66" y="382.80" width="9.93" height="10.00" fill="rgba(40,40,215,.9)" stroke="#0000ff" stroke-width="1.3"/><rect x="644.59" y="382.80" width="9.93" height="10.00" fill="rgba(40,40,215,.9)" stroke="#0000ff" stroke-width="1.3"/><rect x="655.52" y="382.80" width="9.93" height="10.00" fill="rgba(40,40,215,.9)" stroke="#0000ff" stroke-width="1.3"/><rect x="622.73" y="393.80" width="9.93" height="10.00" fill="rgba(40,40,215,.9)" stroke="#0000ff" stroke-width="1.3"/><rect x="633.66" y="393.80" width="9.93" height="10.00" fill="rgba(40,40,215,.9)" stroke="#0000ff" stroke-width="1.3"/><rect x="644.59" y="393.80" width="9.93" height="10.00" fill="rgba(40,40,215,.9)" stroke="#0000ff" stroke-width="1.3"/><rect x="633.66" y="404.80" width="9.93" height="10.00" fill="rgba(40,40,215,.9)" stroke="#0000ff" stroke-width="1.3"/><rect x="644.59" y="404.80" width="9.93" height="10.00" fill="rgba(40,40,215,.9)" stroke="#0000ff" stroke-width="1.3"/><rect x="707.20" y="424.90" width="10.10" height="9.77" fill="rgba(225,40,25,.9)" stroke="#ff0000" stroke-width="1.3"/><rect x="718.30" y="424.90" width="10.10" height="9.77" fill="rgba(225,40,25,.9)" stroke="#ff0000" stroke-width="1.3"/><rect x="707.20" y="435.67" width="10.10" height="9.77" fill="rgba(225,40,25,.9)" stroke="#ff0000" stroke-width="1.3"/><rect x="718.30" y="435.67" width="10.10" height="9.77" fill="rgba(225,40,25,.9)" stroke="#ff0000" stroke-width="1.3"/><rect x="696.10" y="446.44" width="10.10" height="9.77" fill="rgba(225,40,25,.9)" stroke="#ff0000" stroke-width="1.3"/><rect x="707.20" y="446.44" width="10.10" height="9.77" fill="rgba(225,40,25,.9)" stroke="#ff0000" stroke-width="1.3"/><rect x="718.30" y="446.44" width="10.10" height="9.77" fill="rgba(225,40,25,.9)" stroke="#ff0000" stroke-width="1.3"/><rect x="696.10" y="457.21" width="10.10" height="9.77" fill="rgba(225,40,25,.9)" stroke="#ff0000" stroke-width="1.3"/><rect x="707.20" y="457.21" width="10.10" height="9.77" fill="rgba(225,40,25,.9)" stroke="#ff0000" stroke-width="1.3"/><rect x="718.30" y="457.21" width="10.10" height="9.77" fill="rgba(225,40,25,.9)" stroke="#ff0000" stroke-width="1.3"/><rect x="696.10" y="467.98" width="10.10" height="9.77" fill="rgba(225,40,25,.9)" stroke="#ff0000" stroke-width="1.3"/><rect x="707.20" y="478.75" width="10.10" height="9.77" fill="rgba(225,40,25,.9)" stroke="#ff0000" stroke-width="1.3"/><rect x="718.30" y="478.75" width="10.10" height="9.77" fill="rgba(225,40,25,.9)" stroke="#ff0000" stroke-width="1.3"/></svg>
<div class="a" style="left:1032px;top:122px;width:644px;height:478px;border:2px solid #b0008b;background:#fff"></div>
<svg class="a" style="left:1040px;top:126px" width="627" height="470" viewBox="1040 126 627 470"><defs><linearGradient id="mintL" x1="0" y1="0" x2="0" y2="1"><stop offset="0" stop-color="#d9f8de"/><stop offset=".3" stop-color="#c6e6cf"/><stop offset=".55" stop-color="#bbd8c4"/><stop offset=".8" stop-color="#b6d8c4"/><stop offset="1" stop-color="#bbe4ce"/></linearGradient><linearGradient id="dk" x1="0" y1="0" x2="1" y2="0"><stop offset="0" stop-color="#3c5a50" stop-opacity="0"/><stop offset=".5" stop-color="#3c5a50" stop-opacity=".08"/><stop offset="1" stop-color="#3c5a50" stop-opacity=".32"/></linearGradient><linearGradient id="mintR" x1="0" y1="0" x2="0" y2="1"><stop offset="0" stop-color="#bfdacd"/><stop offset=".35" stop-color="#cce8d6"/><stop offset=".62" stop-color="#c2dcd0"/><stop offset="1" stop-color="#b9d3cb"/></linearGradient><linearGradient id="flr" x1="0" y1="0" x2="0" y2="1"><stop offset="0" stop-color="#84a093"/><stop offset="1" stop-color="#b2cfbb"/></linearGradient><pattern id="st" x="1190.7" y="0" width="8.36" height="10" patternUnits="userSpaceOnUse"><rect width="8.36" height="10" fill="#b9ad96"/><rect x="0.3" width="2.8" height="10" fill="#241d50"/><rect x="3.1" width=".7" height="10" fill="#84778a"/><rect x="7.96" width=".7" height="10" fill="#84778a"/></pattern><pattern id="sf" x="1190.6" y="0" width="8.36" height="10" patternUnits="userSpaceOnUse"><rect x="0" width="3.8" height="10" fill="#26263a" opacity=".72"/></pattern><pattern id="sg" x="1190.6" y="0" width="8.36" height="10" patternUnits="userSpaceOnUse"><rect x="0" width="3.6" height="10" fill="#4a5a68" opacity=".55"/></pattern><linearGradient id="fade" x1="0" y1="0" x2="0" y2="1"><stop offset="0" stop-color="#fff"/><stop offset="1" stop-color="#555"/></linearGradient><mask id="fm"><rect x="1190" y="536" width="400" height="62" fill="url(#fade)"/></mask><pattern id="sb" x="1190.7" y="0" width="8.36" height="10" patternUnits="userSpaceOnUse"><rect x="3.6" width="4.4" height="10" fill="#8a8e94" opacity=".5"/></pattern><clipPath id="bc"><path d="M1117.5 496H1588.6L1589 532L1118 540z"/></clipPath><filter id="bl"><feGaussianBlur stdDeviation="1.2"/></filter><filter id="bl3"><feGaussianBlur stdDeviation="3"/></filter></defs><rect x="1040" y="126" width="627" height="470" fill="url(#mintL)"/><rect x="1040" y="126" width="80" height="400" fill="url(#dk)"/><rect x="1584" y="126" width="83" height="470" fill="url(#mintR)"/><path d="M1100 126H1125L1112 140z" fill="#2f8f7a"/><path d="M1118 520H1590V596H1040V596L1100 596L1160 539z" fill="url(#flr)"/><path d="M1040 530L1118 520L1156 541L1103 596H1040z" fill="#bae3cd"/><g mask="url(#fm)"><rect x="1196" y="538" width="346" height="58" fill="url(#sg)" filter="url(#bl)"/></g><path d="M1110 126H1584L1589 532L1118 540z" fill="#5e6274"/><rect x="1118" y="126" width="466" height="371" fill="url(#sf)"/><rect x="1110" y="126" width="474" height="14" fill="#2c3040" opacity=".88"/><rect x="1112" y="140" width="78" height="8" fill="#383844" opacity=".7"/><path d="M1543 126H1584L1589 536H1543z" fill="#262a3e" opacity=".5"/><rect x="1190" y="140" width="352" height="356" fill="url(#st)"/><rect x="1190" y="140" width="352" height="8" fill="#2a2838" opacity=".45"/><rect x="1190" y="126" width="352" height="14" fill="url(#st)" opacity=".07"/><path d="M1117.5 496H1588.6L1589 532L1118 540z" fill="#2e3448" opacity=".92"/><g clip-path="url(#bc)"><rect x="1196" y="494" width="346" height="48" fill="url(#sb)" filter="url(#bl)"/></g><ellipse cx="1118" cy="158" rx="8" ry="9" fill="#2e2e38"/><path d="M1112 150L1180 128" stroke="#3a3a44" stroke-width="7"/><path d="M1296 126H1667V200L1610 126z" fill="none"/><path d="M1616 126H1667V188z" fill="#6a6d72"/><path d="M1605 126L1667 198" stroke="#f4f8f2" stroke-width="3.4"/><path d="M1614 126L1667 187" stroke="#f4f8f2" stroke-width="3"/><path d="M1609.5 126L1667 192.5" stroke="#8a6a6c" stroke-width="1.2"/><ellipse cx="1052" cy="335" rx="22" ry="40" fill="#f2fbf6" opacity=".8" filter="url(#bl3)"/><path d="M1040 268C1072 258 1106 262 1103 296C1100 326 1068 352 1040 368" fill="none" stroke="#2b2a36" stroke-width="6" filter="url(#bl)"/><path d="M1553 372C1560 320 1575 285 1590 268" fill="none" stroke="#7a5f6c" stroke-width="5" opacity=".6" filter="url(#bl)"/><path d="M1588 270C1610 240 1645 238 1667 250" fill="none" stroke="#eef4ec" stroke-width="11" opacity=".85" filter="url(#bl)"/><rect x="1190.5" y="147.5" width="343" height="343" fill="none" stroke="#0000ff" stroke-width="1.3"/><path d="M1262 306L1278 320" stroke="#2a2630" stroke-width="6" stroke-linecap="round" filter="url(#bl)"/><path d="M1394.8 287.4L1408.2 272.6L1423.2 261.1L1439.9 252.7L1457.0 250.0L1473.1 252.4L1488.7 260.4L1503.8 275.2L1516.5 296.2L1526.6 319.7L1534.9 343.1L1540.6 365.7L1544.3 384.3L1546.0 397.2L1550.0 396.8L1549.7 383.7L1547.4 364.3L1543.1 340.9L1535.4 316.3L1525.5 291.8L1512.2 268.8L1495.3 251.6L1476.9 241.6L1457.0 238.0L1436.1 241.3L1416.8 250.9L1399.8 263.4L1385.2 278.6z" fill="#e4a4a8" filter="url(#bl)"/><path d="M1385 286L1400 272" stroke="#f6f2f0" stroke-width="12" filter="url(#bl)"/><path d="M1408 262l7 9" stroke="#e8343c" stroke-width="5" filter="url(#bl)"/><path d="M1322 515C1318 545 1308 560 1300 578" stroke="#e4c6c8" stroke-width="16" stroke-linecap="round" fill="none" opacity=".8" filter="url(#bl3)"/><path d="M1286.3 356.5L1287.6 335L1297.6 320L1314 306.4L1332.7 296.4L1355 290L1370 286.3L1383 282H1403V302.6L1406.7 320L1410.5 332.7L1411.7 355L1412.5 378L1410 394L1404.2 401.7L1410.5 406.7L1418 413L1418.7 430.5L1430.5 435.6L1440.6 444.3L1446.8 458L1460.6 464.4L1467.6 472V505.3H1435.5L1430.5 502.8H1396.7L1388 497L1385 490.2H1360.3L1350.3 493.2L1335.2 510.8L1327.7 513.3V520.3H1305.6V497.7L1311.9 497V490.2H1307.6V444.3L1297.6 428L1291.3 400.4L1286.3 376.6z" fill="#f1ece8" stroke="#efeae6" stroke-width="5" filter="url(#bl)" opacity=".8"/><path d="M1286.3 356.5L1287.6 335L1297.6 320L1314 306.4L1332.7 296.4L1355 290L1370 286.3L1383 282H1403V302.6L1406.7 320L1410.5 332.7L1411.7 355L1412.5 378L1410 394L1404.2 401.7L1410.5 406.7L1418 413L1418.7 430.5L1430.5 435.6L1440.6 444.3L1446.8 458L1460.6 464.4L1467.6 472V505.3H1435.5L1430.5 502.8H1396.7L1388 497L1385 490.2H1360.3L1350.3 493.2L1335.2 510.8L1327.7 513.3V520.3H1305.6V497.7L1311.9 497V490.2H1307.6V444.3L1297.6 428L1291.3 400.4L1286.3 376.6z" fill="#fbf664"/><path d="M1312 490.3H1360" stroke="#a0a070" stroke-width="1"/><path d="M1372 462C1385 470 1400 474 1412 474" stroke="#e8cf3a" stroke-width="8" fill="none" opacity=".7" filter="url(#bl3)"/><path d="M1404 420C1407 426 1412 432 1418 436" stroke="#e8cf3a" stroke-width="7" fill="none" opacity=".7" filter="url(#bl3)"/><path d="M1279.6 359L1285.8 356V376L1279.6 373.4z" fill="#e83a32"/><circle cx="1297.2" cy="372.7" r="4.6" fill="#ffee00" stroke="#000" stroke-width="1"/><circle cx="1366" cy="410" r="4.6" fill="#ff0000" stroke="#000" stroke-width="1"/><circle cx="1471" cy="511" r="4.6" fill="#00ff00" stroke="#000" stroke-width="1"/><path d="M1579 521.5L1600 506L1640 482L1667 466V596H1584L1583 545z" fill="#f6faee" filter="url(#bl)"/><path d="M1582 524L1600 520L1610 545L1600 548z" fill="#d8d8c8" opacity=".6" filter="url(#bl3)"/><path d="M1622 517l6 22l4 4" stroke="#8a8a86" stroke-width="2" fill="none" filter="url(#bl)"/><rect x="1665.3" y="126" width="1.4" height="62" fill="#2a7070"/><rect x="1665.3" y="186" width="1.4" height="410" fill="#20f0f0"/></svg>
<div class="a" style="left:390px;top:607px;width:1286px;height:132px;border:1px solid #a0a0a0;background:#fff"></div>
<div class="t " style="left:399px;top:622px;">Start Time :</div>
<div class="t " style="left:464.5px;top:622px;letter-spacing:.18px">00:00,00&nbsp; (10:29:01,09)</div>
<div class="t " style="left:875px;top:622px;">Current Time :</div>
<div class="t " style="left:953.3px;top:622px;letter-spacing:.18px">01:42,46&nbsp; (10:30:43,55)</div>
<div class="bt" style="left:1079px;top:619px;width:114px;height:20px;line-height:18px;line-height:17px">Extract current frames</div>
<div class="t " style="left:1486px;top:622px;">Stop Time :</div>
<div class="t " style="left:1545.8px;top:622px;letter-spacing:.19px">05:00,00&nbsp; (10:34:01,32)</div>
<div class="a" style="left:400px;top:646px;width:1265px;height:50px;border:2px solid #b0008b;background:#fff"></div>
<svg class="a" style="left:403px;top:648px" width="1260" height="46" viewBox="403 648 1260 46" shape-rendering="crispEdges"><rect x="403" y="649" width="1257" height="44" fill="#000"/><rect x="403" y="651" width="1257" height="40" fill="#32cd32"/><rect x="412" y="651" width="1.0" height="40" fill="#ff4500"/><rect x="422" y="651" width="1.0" height="40" fill="#ffa500"/><rect x="425.8" y="651" width="3.0" height="40" fill="#ff4500"/><rect x="444" y="651" width="1.0" height="40" fill="#000000"/><rect x="482" y="651" width="1.0" height="40" fill="#ff4500"/><rect x="495" y="651" width="5.0" height="40" fill="#90ee90"/><rect x="512" y="651" width="2.0" height="40" fill="#ff4500"/><rect x="519" y="651" width="1.0" height="40" fill="#ff4500"/><rect x="520.3" y="651" width="1.0" height="40" fill="#90ee90"/><rect x="521.8" y="651" width="1.2" height="40" fill="#90ee90"/><rect x="527.3" y="651" width="1.7" height="40" fill="#ff4500"/><rect x="539" y="651" width="1.0" height="40" fill="#ffa500"/><rect x="542" y="651" width="1.0" height="40" fill="#ff4500"/><rect x="551" y="651" width="1.0" height="40" fill="#ffa500"/><rect x="552" y="651" width="2.0" height="40" fill="#ff4500"/><rect x="554" y="651" width="3.7" height="40" fill="#ffa500"/><rect x="569" y="651" width="1.0" height="40" fill="#ffa500"/><rect x="573" y="651" width="18.0" height="40" fill="#ffa500"/><rect x="582" y="651" width="1.0" height="40" fill="#90ee90"/><rect x="591" y="651" width="2.0" height="40" fill="#90ee90"/><rect x="596" y="651" width="2.0" height="40" fill="#90ee90"/><rect x="603" y="651" width="3.0" height="40" fill="#ff4500"/><rect x="608" y="651" width="1.3" height="40" fill="#ff4500"/><rect x="613.8" y="651" width="12.2" height="40" fill="#ffa500"/><rect x="629" y="651" width="1.0" height="40" fill="#ff4500"/><rect x="630" y="651" width="2.0" height="40" fill="#ffa500"/><rect x="644" y="651" width="1.0" height="40" fill="#000000"/><rect x="645" y="651" width="2.0" height="40" fill="#ffa500"/><rect x="662" y="651" width="2.0" height="40" fill="#ffa500"/><rect x="666" y="651" width="1.0" height="40" fill="#ff4500"/><rect x="671" y="651" width="3.7" height="40" fill="#ff4500"/><rect x="674.7" y="651" width="1.3" height="40" fill="#ffa500"/><rect x="680" y="651" width="1.0" height="40" fill="#90ee90"/><rect x="682" y="651" width="1.0" height="40" fill="#90ee90"/><rect x="687" y="651" width="3.0" height="40" fill="#ffa500"/><rect x="705.7" y="651" width="2.3" height="40" fill="#ffa500"/><rect x="709.7" y="651" width="2.0" height="40" fill="#ff4500"/><rect x="724" y="651" width="7.0" height="40" fill="#90ee90"/><rect x="750" y="651" width="2.0" height="40" fill="#90ee90"/><rect x="752" y="651" width="2.0" height="40" fill="#ffa500"/><rect x="768" y="651" width="2.0" height="40" fill="#90ee90"/><rect x="770" y="651" width="1.0" height="40" fill="#ffa500"/><rect x="771" y="651" width="2.0" height="40" fill="#90ee90"/><rect x="779" y="651" width="1.0" height="40" fill="#ffa500"/><rect x="780" y="651" width="2.0" height="40" fill="#ff4500"/><rect x="797" y="651" width="1.0" height="40" fill="#ffa500"/><rect x="814" y="651" width="3.0" height="40" fill="#90ee90"/><rect x="818" y="651" width="3.0" height="40" fill="#ffa500"/><rect x="850" y="651" width="13.0" height="40" fill="#ffa500"/><rect x="872" y="651" width="4.7" height="40" fill="#90ee90"/><rect x="876.7" y="651" width="2.3" height="40" fill="#ffa500"/><rect x="887" y="651" width="1.0" height="40" fill="#ffa500"/><rect x="888" y="651" width="3.0" height="40" fill="#ff4500"/><rect x="891" y="651" width="1.0" height="40" fill="#ffa500"/><rect x="892" y="651" width="14.0" height="40" fill="#90ee90"/><rect x="894.6" y="651" width="1.0" height="40" fill="#ffffff"/><rect x="916" y="651" width="32.0" height="40" fill="#90ee90"/><rect x="918" y="651" width="1.0" height="40" fill="#ffa500"/><rect x="926" y="651" width="1.0" height="40" fill="#ffa500"/><rect x="932" y="651" width="1.7" height="40" fill="#ffa500"/><rect x="944" y="651" width="1.7" height="40" fill="#ffa500"/><rect x="947" y="651" width="1.0" height="40" fill="#ffa500"/><rect x="971" y="651" width="2.0" height="40" fill="#90ee90"/><rect x="974" y="651" width="2.0" height="40" fill="#ffa500"/><rect x="978" y="651" width="11.7" height="40" fill="#ff4500"/><rect x="989.7" y="651" width="1.3" height="40" fill="#ffa500"/><rect x="991.3" y="651" width="1.3" height="40" fill="#ff4500"/><rect x="999" y="651" width="1.0" height="40" fill="#ffa500"/><rect x="1001" y="651" width="1.6" height="40" fill="#ff4500"/><rect x="1006.3" y="651" width="1.2" height="40" fill="#ffa500"/><rect x="1007.5" y="651" width="8.5" height="40" fill="#90ee90"/><rect x="1010.5" y="651" width="1.2" height="40" fill="#ffffff"/><rect x="1016" y="651" width="2.0" height="40" fill="#ffa500"/><rect x="1018" y="651" width="10.0" height="40" fill="#90ee90"/><rect x="1028" y="651" width="1.2" height="40" fill="#ffa500"/><rect x="1041" y="651" width="2.0" height="40" fill="#ffa500"/><rect x="1086" y="651" width="1.0" height="40" fill="#000000"/><rect x="1099" y="651" width="10.7" height="40" fill="#ff4500"/><rect x="1109.7" y="651" width="1.3" height="40" fill="#ffa500"/><rect x="1111" y="651" width="2.0" height="40" fill="#ff4500"/><rect x="1113" y="651" width="3.0" height="40" fill="#ffa500"/><rect x="1133" y="651" width="4.0" height="40" fill="#90ee90"/><rect x="1148" y="651" width="2.0" height="40" fill="#90ee90"/><rect x="1150" y="651" width="1.0" height="40" fill="#ffa500"/><rect x="1151" y="651" width="1.0" height="40" fill="#ff4500"/><rect x="1152.8" y="651" width="1.2" height="40" fill="#ff4500"/><rect x="1161" y="651" width="5.0" height="40" fill="#ff4500"/><rect x="1167" y="651" width="1.0" height="40" fill="#ff4500"/><rect x="1181.5" y="651" width="0.8" height="40" fill="#ffa500"/><rect x="1184" y="651" width="1.0" height="40" fill="#ff4500"/><rect x="1192" y="651" width="2.0" height="40" fill="#ffa500"/><rect x="1211.4" y="651" width="1.0" height="40" fill="#ffa500"/><rect x="1212.4" y="651" width="2.6" height="40" fill="#90ee90"/><rect x="1221.7" y="651" width="1.1" height="40" fill="#ffa500"/><rect x="1231" y="651" width="2.0" height="40" fill="#90ee90"/><rect x="1239.4" y="651" width="1.0" height="40" fill="#ffa500"/><rect x="1240.4" y="651" width="10.6" height="40" fill="#90ee90"/><rect x="1251" y="651" width="1.0" height="40" fill="#ff4500"/><rect x="1252" y="651" width="2.7" height="40" fill="#90ee90"/><rect x="1254.7" y="651" width="6.3" height="40" fill="#ffa500"/><rect x="1257.6" y="651" width="1.2" height="40" fill="#ffffff"/><rect x="1261" y="651" width="3.7" height="40" fill="#ff4500"/><rect x="1264.7" y="651" width="1.3" height="40" fill="#ffffff"/><rect x="1266" y="651" width="3.0" height="40" fill="#ff4500"/><rect x="1279" y="651" width="1.0" height="40" fill="#ffa500"/><rect x="1282" y="651" width="2.0" height="40" fill="#90ee90"/><rect x="1290" y="651" width="1.0" height="40" fill="#ff4500"/><rect x="1291" y="651" width="5.7" height="40" fill="#ffa500"/><rect x="1301.3" y="651" width="1.3" height="40" fill="#ffa500"/><rect x="1304" y="651" width="1.0" height="40" fill="#ff4500"/><rect x="1307" y="651" width="2.0" height="40" fill="#ffa500"/><rect x="1309" y="651" width="13.7" height="40" fill="#ff4500"/><rect x="1322.7" y="651" width="2.0" height="40" fill="#ffa500"/><rect x="1324.7" y="651" width="1.0" height="40" fill="#ff4500"/><rect x="1325.7" y="651" width="22.3" height="40" fill="#ffa500"/><rect x="1348" y="651" width="1.2" height="40" fill="#ffffff"/><rect x="1349.2" y="651" width="5.5" height="40" fill="#ff4500"/><rect x="1354.7" y="651" width="1.3" height="40" fill="#ffa500"/><rect x="1356" y="651" width="19.0" height="40" fill="#ff4500"/><rect x="1375" y="651" width="2.7" height="40" fill="#ffa500"/><rect x="1377.7" y="651" width="1.3" height="40" fill="#ff4500"/><rect x="1379" y="651" width="5.0" height="40" fill="#ffa500"/><rect x="1384" y="651" width="1.0" height="40" fill="#ff4500"/><rect x="1385" y="651" width="6.0" height="40" fill="#ffa500"/><rect x="1391" y="651" width="1.3" height="40" fill="#90ee90"/><rect x="1392.3" y="651" width="1.1" height="40" fill="#ffa500"/><rect x="1393.4" y="651" width="1.6" height="40" fill="#ff4500"/><rect x="1395" y="651" width="2.0" height="40" fill="#ffffff"/><rect x="1397" y="651" width="13.0" height="40" fill="#ff4500"/><rect x="1410" y="651" width="8.0" height="40" fill="#ffa500"/><rect x="1418" y="651" width="1.2" height="40" fill="#90ee90"/><rect x="1419.2" y="651" width="3.8" height="40" fill="#ffa500"/><rect x="1423" y="651" width="7.0" height="40" fill="#90ee90"/><rect x="1430" y="651" width="4.0" height="40" fill="#ff4500"/><rect x="1434" y="651" width="2.7" height="40" fill="#ffa500"/><rect x="1436.7" y="651" width="1.3" height="40" fill="#90ee90"/><rect x="1438" y="651" width="2.0" height="40" fill="#ff4500"/><rect x="1440" y="651" width="1.3" height="40" fill="#90ee90"/><rect x="1441.3" y="651" width="1.4" height="40" fill="#ffa500"/><rect x="1442.7" y="651" width="17.3" height="40" fill="#ffa500"/><rect x="1460" y="651" width="1.3" height="40" fill="#90ee90"/><rect x="1467" y="651" width="1.0" height="40" fill="#90ee90"/><rect x="1468" y="651" width="3.0" height="40" fill="#ffa500"/><rect x="1486" y="651" width="4.0" height="40" fill="#ffa500"/><rect x="1495" y="651" width="4.0" height="40" fill="#90ee90"/><rect x="1508" y="651" width="4.0" height="40" fill="#90ee90"/><rect x="1518" y="651" width="1.0" height="40" fill="#90ee90"/><rect x="1519" y="651" width="2.0" height="40" fill="#ff4500"/><rect x="1522.2" y="651" width="1.2" height="40" fill="#ffa500"/><rect x="1528" y="651" width="5.0" height="40" fill="#90ee90"/><rect x="1535.7" y="651" width="1.1" height="40" fill="#ffa500"/><rect x="1544" y="651" width="2.0" height="40" fill="#ff4500"/><rect x="1555" y="651" width="2.0" height="40" fill="#ffa500"/><rect x="1561" y="651" width="7.0" height="40" fill="#ffa500"/><rect x="1568" y="651" width="3.0" height="40" fill="#ff4500"/><rect x="1571" y="651" width="3.0" height="40" fill="#ffa500"/><rect x="1574" y="651" width="2.0" height="40" fill="#ff4500"/><rect x="1576" y="651" width="1.2" height="40" fill="#ffa500"/><rect x="1577.2" y="651" width="6.8" height="40" fill="#ff4500"/><rect x="1584" y="651" width="1.6" height="40" fill="#ffffff"/><rect x="1585.6" y="651" width="1.4" height="40" fill="#ffa500"/><rect x="1587" y="651" width="2.0" height="40" fill="#ffffff"/><rect x="1589" y="651" width="4.0" height="40" fill="#ffa500"/><rect x="1593" y="651" width="1.2" height="40" fill="#ffffff"/><rect x="1594.2" y="651" width="1.0" height="40" fill="#ffa500"/><rect x="1595.2" y="651" width="1.1" height="40" fill="#ffffff"/><rect x="1596.3" y="651" width="33.4" height="40" fill="#ffa500"/><rect x="1629.7" y="651" width="3.3" height="40" fill="#ff4500"/><rect x="1633" y="651" width="24.0" height="40" fill="#ffa500"/><rect x="1657" y="651" width="1.0" height="40" fill="#ff4500"/><rect x="1658" y="651" width="2.0" height="40" fill="#ffa500"/><rect x="567.3" y="649.5" width="0.8" height="43" fill="#32cd32"/><rect x="757.3" y="649.5" width="0.8" height="43" fill="#32cd32"/><rect x="1182.3" y="649.5" width="0.8" height="43" fill="#32cd32"/><rect x="1441.3" y="649.5" width="1" height="43" fill="#ffa500"/></svg>
<svg class="a" style="left:815px;top:646px" width="34" height="50" viewBox="815 646 34 50"><rect x="831" y="648" width="2" height="46" fill="#ffff00"/><path d="M818 650H846L832 663.5z" fill="#d000a0"/></svg>
<div class="bt" style="left:401px;top:704px;width:26px;height:22px;line-height:20px;"><svg width="12" height="14" viewBox="0 0 12 14" style="vertical-align:-3px"><rect x="1" y="1" width="2" height="12"/><path d="M11 1L4 7L11 13z"/></svg></div>
<div class="bt" style="left:435px;top:704px;width:72px;height:22px;line-height:20px;"><svg width="14" height="14" viewBox="0 0 14 14" style="vertical-align:-3px"><path d="M7 1L0.5 7L7 13zM13.5 1L7 7L13.5 13z"/></svg> Post -</div>
<div class="bt" style="left:516px;top:704px;width:73px;height:22px;line-height:20px;"><svg width="9" height="14" viewBox="0 0 9 14" style="vertical-align:-3px"><path d="M8 1L1 7L8 13z"/></svg>&nbsp; Prev</div>
<div class="bt" style="left:906px;top:703px;width:25px;height:24px;line-height:22px;"><svg width="22" height="22" viewBox="0 0 20 20" style="vertical-align:-6px;margin-left:-1px"><path d="M11 11L17.5 17.5" stroke="#8c8c8c" stroke-width="3.2" stroke-linecap="round"/><path d="M11 11L17.5 17.5" stroke="#e8e8e8" stroke-width="1.4" stroke-linecap="round"/><circle cx="7.5" cy="7.5" r="5.5" fill="#f4f4f4" stroke="#444" stroke-width="1.3"/><path d="M4.5 7.5h6" stroke="#222" stroke-width="1.8"/></svg></div>
<div class="bt" style="left:939px;top:703px;width:25px;height:24px;line-height:22px;"><svg width="22" height="22" viewBox="0 0 20 20" style="vertical-align:-6px;margin-left:-1px"><path d="M11 11L17.5 17.5" stroke="#8c8c8c" stroke-width="3.2" stroke-linecap="round"/><path d="M11 11L17.5 17.5" stroke="#e8e8e8" stroke-width="1.4" stroke-linecap="round"/><circle cx="7.5" cy="7.5" r="5.5" fill="#f4f4f4" stroke="#444" stroke-width="1.3"/><path d="M4.5 7.5h6M7.5 4.5v6" stroke="#222" stroke-width="1.8"/></svg></div>
<div class="bt" style="left:972px;top:704px;width:73px;height:22px;line-height:20px;"><svg width="10" height="12" viewBox="0 0 10 12" style="vertical-align:-2px"><path d="M1 0.5L9.5 6L1 11.5z" fill="#2e9e3e"/></svg>&nbsp; Play</div>
<div class="t " style="left:1052px;top:709px;letter-spacing:-.3px">Video Speed:</div>
<div class="a" style="left:1121px;top:707px;width:38px;height:17px;border:1px solid #e3e3e3;border-bottom-color:#8a8a8a;border-radius:2px;background:#fff;line-height:16px;padding-left:3px">1,0<div class="a" style="right:1px;top:1px;width:12px;height:14px;background:#f0f0f0;border:1px solid #d5d5d5"></div><svg class="a" style="right:3px;top:2px" width="8" height="12" viewBox="0 0 8 12"><path d="M1.5 5L4 1.5L6.5 5zM1.5 7L4 10.5L6.5 7z" fill="#222"/></svg></div>
<div class="bt" style="left:1476px;top:704px;width:72px;height:22px;line-height:20px;"><svg width="9" height="14" viewBox="0 0 9 14" style="vertical-align:-3px"><path d="M1 1L8 7L1 13z"/></svg>&nbsp; Next</div>
<div class="bt" style="left:1557px;top:704px;width:73px;height:22px;line-height:20px;"><svg width="14" height="14" viewBox="0 0 14 14" style="vertical-align:-3px"><path d="M0.5 1L7 7L0.5 13zM7 1L13.5 7L7 13z"/></svg> Post +</div>
<div class="bt" style="left:1638px;top:704px;width:26px;height:22px;line-height:20px;"><svg width="12" height="14" viewBox="0 0 12 14" style="vertical-align:-3px"><rect x="9" y="1" width="2" height="12"/><path d="M1 1L8 7L1 13z"/></svg></div>
<div class="pn" style="left:390px;top:746px;width:693px;height:294px;border-color:#b0008b"></div>
<div class="ph" style="left:390px;top:746px;width:693px;height:15px;background:#b0008b;letter-spacing:0.22px">Scoring Navigation Options</div>
<div class="bx" style="left:401px;top:770px;width:204px;height:259px;"></div>
<div class="bx" style="left:611px;top:770px;width:251px;height:259px;"></div>
<div class="bx" style="left:868px;top:770px;width:204px;height:259px;"></div>
<div class="rd" style="left:420.0px;top:791.5px"></div>
<div class="t " style="left:438px;top:791px;">Immobility Postures</div>
<div class="rd" style="left:420.0px;top:814.5px"></div>
<div class="t " style="left:438px;top:814px;">Mobility Postures</div>
<div class="rd on" style="left:420.0px;top:837.5px"></div>
<div class="t " style="left:438px;top:837px;">No Posture Filter</div>
<div class="cb" style="left:630px;top:792.0px"></div>
<div class="t " style="left:647px;top:793px;">Manually Validated Posture</div>
<div class="a" style="left:785px;top:789px;width:30px;height:20px;background:#008000"></div>
<div class="cb" style="left:630px;top:814.0px"></div>
<div class="t " style="left:647px;top:815px;">Auto scored posture level 1</div>
<div class="a" style="left:785px;top:811px;width:30px;height:20px;background:#32cd32"></div>
<svg class="a" style="left:820.5px;top:813px" width="16" height="17" viewBox="0 0 16 17"><ellipse cx="8" cy="15.3" rx="5" ry="1" fill="#bdbdbd"/><circle cx="8" cy="8" r="7.2" fill="#f6f6f6" stroke="#d6d6d6" stroke-width=".6"/><circle cx="8" cy="8" r="5.7" fill="#0b5bb6"/><ellipse cx="8" cy="5.4" rx="4.2" ry="2.6" fill="#4f93e0" opacity=".55"/><path d="M6.6 6.9H9V11H9.9V11.8H6.5V11H7.4V7.7H6.6z" fill="#fff"/><circle cx="8.1" cy="4.7" r="1.15" fill="#fff"/></svg>
<div class="cb" style="left:630px;top:838.0px"></div>
<div class="t " style="left:647px;top:839px;">Auto scored posture level 2</div>
<div class="a" style="left:785px;top:835px;width:30px;height:20px;background:#90ee90"></div>
<svg class="a" style="left:820.5px;top:837px" width="16" height="17" viewBox="0 0 16 17"><ellipse cx="8" cy="15.3" rx="5" ry="1" fill="#bdbdbd"/><circle cx="8" cy="8" r="7.2" fill="#f6f6f6" stroke="#d6d6d6" stroke-width=".6"/><circle cx="8" cy="8" r="5.7" fill="#0b5bb6"/><ellipse cx="8" cy="5.4" rx="4.2" ry="2.6" fill="#4f93e0" opacity=".55"/><path d="M6.6 6.9H9V11H9.9V11.8H6.5V11H7.4V7.7H6.6z" fill="#fff"/><circle cx="8.1" cy="4.7" r="1.15" fill="#fff"/></svg>
<div class="cb" style="left:630px;top:862.0px"></div>
<div class="t " style="left:647px;top:863px;">Auto scored posture level 3</div>
<div class="a" style="left:785px;top:859px;width:30px;height:20px;background:#ffa500"></div>
<svg class="a" style="left:820.5px;top:861px" width="16" height="17" viewBox="0 0 16 17"><ellipse cx="8" cy="15.3" rx="5" ry="1" fill="#bdbdbd"/><circle cx="8" cy="8" r="7.2" fill="#f6f6f6" stroke="#d6d6d6" stroke-width=".6"/><circle cx="8" cy="8" r="5.7" fill="#0b5bb6"/><ellipse cx="8" cy="5.4" rx="4.2" ry="2.6" fill="#4f93e0" opacity=".55"/><path d="M6.6 6.9H9V11H9.9V11.8H6.5V11H7.4V7.7H6.6z" fill="#fff"/><circle cx="8.1" cy="4.7" r="1.15" fill="#fff"/></svg>
<div class="cb" style="left:630px;top:886.0px"></div>
<div class="t " style="left:647px;top:887px;">Auto scored posture level 4</div>
<div class="a" style="left:785px;top:883px;width:30px;height:20px;background:#ff4500"></div>
<svg class="a" style="left:820.5px;top:885px" width="16" height="17" viewBox="0 0 16 17"><ellipse cx="8" cy="15.3" rx="5" ry="1" fill="#bdbdbd"/><circle cx="8" cy="8" r="7.2" fill="#f6f6f6" stroke="#d6d6d6" stroke-width=".6"/><circle cx="8" cy="8" r="5.7" fill="#0b5bb6"/><ellipse cx="8" cy="5.4" rx="4.2" ry="2.6" fill="#4f93e0" opacity=".55"/><path d="M6.6 6.9H9V11H9.9V11.8H6.5V11H7.4V7.7H6.6z" fill="#fff"/><circle cx="8.1" cy="4.7" r="1.15" fill="#fff"/></svg>
<div class="cb" style="left:630px;top:908.0px"></div>
<div class="t " style="left:647px;top:909px;">Manually Ignored Posture</div>
<div class="a" style="left:785px;top:905px;width:30px;height:20px;background:#8b0000"></div>
<div class="cb on" style="left:630px;top:961.0px"><svg width="11" height="11" viewBox="0 0 11 11" style="position:absolute;left:0;top:0"><path d="M2.5 5.6 L4.6 7.6 L8.6 3.4" fill="none" stroke="#e6eef8" stroke-width=".95"/></svg></div>
<div class="t " style="left:647px;top:960.7px;">No Scoring Filter</div>
<div class="t " style="left:891px;top:791px;">No specific posture selected =</div>
<div class="t " style="left:891px;top:804px;">All postures including unlisted</div>
<div class="t " style="left:891px;top:817px;">postures</div>
<div class="cb" style="left:887px;top:840.0px"></div>
<div class="t " style="left:904px;top:839.5px;">Posture (RL+RR)</div>
<div class="cb" style="left:887px;top:860.0px"></div>
<div class="t " style="left:904px;top:859.5px;">Posture (RL+RR+FR)</div>
<div class="cb" style="left:887px;top:880.0px"></div>
<div class="t " style="left:904px;top:879.5px;">Posture (RL+RR+FL)</div>
<div class="cb" style="left:887px;top:900.0px"></div>
<div class="t " style="left:904px;top:899.5px;">Posture (RR+FL+FR)</div>
<div class="cb" style="left:887px;top:920.0px"></div>
<div class="t " style="left:904px;top:919.5px;">Posture (RL+FL+FR)</div>
<div class="cb" style="left:887px;top:940.0px"></div>
<div class="t " style="left:904px;top:939.5px;">Posture (RL+RR+FL+FR)</div>
<div class="pn" style="left:1089px;top:746px;width:230px;height:220px;border-color:#32cd32"></div>
<div class="ph" style="left:1089px;top:746px;width:230px;height:15px;background:#32cd32;letter-spacing:0.26px">Scoring Validation</div>
<div class="t " style="left:1099px;top:770px;">Posture Index :</div>
<div class="t " style="left:1231px;top:770px;">356 / 1035</div>
<div class="bt" style="left:1101px;top:787px;width:206px;height:21px;line-height:19px;">Valid (Enter/Return)</div>
<div class="bt" style="left:1101px;top:813px;width:206px;height:21px;line-height:19px;">Ignore (Backspace)</div>
<div class="t " style="left:1142px;top:844px;">Immobility+Mobility</div>
<svg class="a" style="left:1244px;top:842px" width="16" height="17" viewBox="0 0 16 17"><ellipse cx="8" cy="15.3" rx="5" ry="1" fill="#bdbdbd"/><circle cx="8" cy="8" r="7.2" fill="#f6f6f6" stroke="#d6d6d6" stroke-width=".6"/><circle cx="8" cy="8" r="5.7" fill="#0b5bb6"/><ellipse cx="8" cy="5.4" rx="4.2" ry="2.6" fill="#4f93e0" opacity=".55"/><path d="M6.6 6.9H9V11H9.9V11.8H6.5V11H7.4V7.7H6.6z" fill="#fff"/><circle cx="8.1" cy="4.7" r="1.15" fill="#fff"/></svg>
<div class="t " style="left:1099px;top:865px;">Acquisition Duration:</div>
<div class="t " style="left:1207px;top:865px;">05:00</div>
<div class="t" style="left:1099px;top:888px;width:103px;overflow:hidden">Mobility Available Time:</div>
<div class="t " style="left:1207px;top:888px;">05:00</div>
<svg class="a" style="left:1286px;top:887px" width="16" height="17" viewBox="0 0 16 17"><ellipse cx="8" cy="15.3" rx="5" ry="1" fill="#bdbdbd"/><circle cx="8" cy="8" r="7.2" fill="#f6f6f6" stroke="#d6d6d6" stroke-width=".6"/><circle cx="8" cy="8" r="5.7" fill="#0b5bb6"/><ellipse cx="8" cy="5.4" rx="4.2" ry="2.6" fill="#4f93e0" opacity=".55"/><path d="M6.6 6.9H9V11H9.9V11.8H6.5V11H7.4V7.7H6.6z" fill="#fff"/><circle cx="8.1" cy="4.7" r="1.15" fill="#fff"/></svg>
<div class="t " style="left:1099px;top:915px;">Scorable Time :</div>
<div class="t " style="left:1207px;top:915px;">05:00</div>
<div class="t " style="left:1243px;top:915px;">100 %</div>
<svg class="a" style="left:1286px;top:914px" width="16" height="17" viewBox="0 0 16 17"><ellipse cx="8" cy="15.3" rx="5" ry="1" fill="#bdbdbd"/><circle cx="8" cy="8" r="7.2" fill="#f6f6f6" stroke="#d6d6d6" stroke-width=".6"/><circle cx="8" cy="8" r="5.7" fill="#0b5bb6"/><ellipse cx="8" cy="5.4" rx="4.2" ry="2.6" fill="#4f93e0" opacity=".55"/><path d="M6.6 6.9H9V11H9.9V11.8H6.5V11H7.4V7.7H6.6z" fill="#fff"/><circle cx="8.1" cy="4.7" r="1.15" fill="#fff"/></svg>
<div class="t " style="left:1099px;top:942px;">Manually validated :</div>
<div class="t " style="left:1207px;top:942px;">00:00</div>
<div class="t " style="left:1242px;top:942px;">0 %</div>
<svg class="a" style="left:1286px;top:941px" width="16" height="17" viewBox="0 0 16 17"><ellipse cx="8" cy="15.3" rx="5" ry="1" fill="#bdbdbd"/><circle cx="8" cy="8" r="7.2" fill="#f6f6f6" stroke="#d6d6d6" stroke-width=".6"/><circle cx="8" cy="8" r="5.7" fill="#0b5bb6"/><ellipse cx="8" cy="5.4" rx="4.2" ry="2.6" fill="#4f93e0" opacity=".55"/><path d="M6.6 6.9H9V11H9.9V11.8H6.5V11H7.4V7.7H6.6z" fill="#fff"/><circle cx="8.1" cy="4.7" r="1.15" fill="#fff"/></svg>
<div class="pn" style="left:1089px;top:972px;width:230px;height:68px;border-color:#b0008b"></div>
<div class="ph" style="left:1089px;top:972px;width:230px;height:15px;background:#b0008b;letter-spacing:0.26px">Scoring Save</div>
<div class="bt" style="left:1106px;top:1000px;width:196px;height:22px;line-height:20px;"><svg width="15" height="14" viewBox="0 0 15 14" style="vertical-align:-2px"><path d="M1 0.5H14V13.5H1z" fill="#2b2b2b"/><rect x="3" y="0.5" width="9" height="6" fill="#f2f2f2"/><rect x="3.5" y="9" width="8" height="4.5" fill="#c9c9c9"/><rect x="5" y="9.8" width="2" height="3.2" fill="#2b2b2b"/></svg> Save Scoring</div>
<div class="pn" style="left:1325px;top:748px;width:350px;height:290px;border-color:#b0008b"></div>
<div class="ph" style="left:1325px;top:748px;width:350px;height:15px;background:#b0008b;letter-spacing:0.26px">Scoring History</div>
<div class="bx" style="left:1345px;top:781px;width:310px;height:167px;"></div>
<div class="bt" style="left:1423px;top:955px;width:73px;height:21px;line-height:19px;color:#8a8a8a;background:#f7f7f7;border-color:#e2e2e2">Undo</div>
<div class="bt" style="left:1504px;top:955px;width:73px;height:21px;line-height:19px;color:#8a8a8a;background:#f7f7f7;border-color:#e2e2e2">Redo</div>
<div class="cb" style="left:1345px;top:1003.0px"></div>
<div class="t " style="left:1362px;top:1003px;">Disable scoring history (improve scoring peformances)</div>
<div class="pn" style="left:1692px;top:122px;width:217px;height:145px;border-color:#b0008b"></div>
<div class="ph" style="left:1692px;top:122px;width:217px;height:15px;background:#b0008b;letter-spacing:0.26px">Video Display Settings</div>
<div class="cb on" style="left:1712px;top:157.0px"><svg width="11" height="11" viewBox="0 0 11 11" style="position:absolute;left:0;top:0"><path d="M2.5 5.6 L4.6 7.6 L8.6 3.4" fill="none" stroke="#e6eef8" stroke-width=".95"/></svg></div>
<div class="t " style="left:1729px;top:157px;">Show Animal Shape</div>
<div class="cb on" style="left:1712px;top:180.0px"><svg width="11" height="11" viewBox="0 0 11 11" style="position:absolute;left:0;top:0"><path d="M2.5 5.6 L4.6 7.6 L8.6 3.4" fill="none" stroke="#e6eef8" stroke-width=".95"/></svg></div>
<div class="t " style="left:1729px;top:180px;">Show Video Points</div>
<div class="cb on" style="left:1712px;top:203.0px"><svg width="11" height="11" viewBox="0 0 11 11" style="position:absolute;left:0;top:0"><path d="M2.5 5.6 L4.6 7.6 L8.6 3.4" fill="none" stroke="#e6eef8" stroke-width=".95"/></svg></div>
<div class="t " style="left:1729px;top:203px;">Show Arena Window</div>
<div class="cb" style="left:1712px;top:226.0px"></div>
<div class="t " style="left:1729px;top:226px;">Show Scale</div>
<div class="pn" style="left:1692px;top:273px;width:217px;height:135px;border-color:#b0008b"></div>
<div class="ph" style="left:1692px;top:273px;width:217px;height:15px;background:#b0008b;letter-spacing:0.26px">Sensor Display Settings</div>
<div class="cb" style="left:1712px;top:308.0px"></div>
<div class="t " style="left:1729px;top:308px;">Show Animal Shape</div>
<div class="cb" style="left:1712px;top:331.0px"></div>
<div class="t " style="left:1729px;top:331px;">Show Gravity Center</div>
<svg class="a" style="left:1873px;top:329px" width="16" height="17" viewBox="0 0 16 17"><ellipse cx="8" cy="15.3" rx="5" ry="1" fill="#bdbdbd"/><circle cx="8" cy="8" r="7.2" fill="#f6f6f6" stroke="#d6d6d6" stroke-width=".6"/><circle cx="8" cy="8" r="5.7" fill="#0b5bb6"/><ellipse cx="8" cy="5.4" rx="4.2" ry="2.6" fill="#4f93e0" opacity=".55"/><path d="M6.6 6.9H9V11H9.9V11.8H6.5V11H7.4V7.7H6.6z" fill="#fff"/><circle cx="8.1" cy="4.7" r="1.15" fill="#fff"/></svg>
<div class="cb" style="left:1712px;top:354.0px"></div>
<div class="t " style="left:1729px;top:354px;">Show Geometric Center</div>
<svg class="a" style="left:1873px;top:352px" width="16" height="17" viewBox="0 0 16 17"><ellipse cx="8" cy="15.3" rx="5" ry="1" fill="#bdbdbd"/><circle cx="8" cy="8" r="7.2" fill="#f6f6f6" stroke="#d6d6d6" stroke-width=".6"/><circle cx="8" cy="8" r="5.7" fill="#0b5bb6"/><ellipse cx="8" cy="5.4" rx="4.2" ry="2.6" fill="#4f93e0" opacity=".55"/><path d="M6.6 6.9H9V11H9.9V11.8H6.5V11H7.4V7.7H6.6z" fill="#fff"/><circle cx="8.1" cy="4.7" r="1.15" fill="#fff"/></svg>
<div class="pn" style="left:1692px;top:414px;width:217px;height:230px;border-color:#b0008b"></div>
<div class="ph" style="left:1692px;top:414px;width:217px;height:15px;background:#b0008b;letter-spacing:0.26px">Alert Popup Frequency</div>
<div class="t " style="left:1711px;top:454.5px;">Show me the "Warning : Posture</div>
<div class="t " style="left:1711px;top:467px;">Validation" message :</div>
<div class="rd on" style="left:1712.0px;top:495.0px"></div>
<div class="t " style="left:1730px;top:495px;">Always</div>
<div class="rd" style="left:1712.0px;top:518.5px"></div>
<div class="t " style="left:1730px;top:518px;">Every</div>
<div class="a" style="left:1776px;top:517px;width:50px;height:17px;border:1px solid #e3e3e3;border-bottom-color:#8a8a8a;border-radius:2px;background:#fff;line-height:16px;padding-left:3px">10<div class="a" style="right:1px;top:1px;width:12px;height:14px;background:#f0f0f0;border:1px solid #d5d5d5"></div><svg class="a" style="right:3px;top:2px" width="8" height="12" viewBox="0 0 8 12"><path d="M1.5 5L4 1.5L6.5 5zM1.5 7L4 10.5L6.5 7z" fill="#222"/></svg></div>
<div class="t " style="left:1832px;top:519px;">validations</div>
<div class="rd" style="left:1712.0px;top:542.5px"></div>
<div class="t " style="left:1730px;top:542px;">Never</div>
<div class="pn" style="left:1692px;top:650px;width:217px;height:397px;border-color:#b0008b"></div>
<div class="ph" style="left:1692px;top:650px;width:217px;height:15px;background:#b0008b;letter-spacing:0.26px">Legend</div>
<svg class="a" style="left:1694px;top:665px" width="213" height="379" viewBox="1694 665 213 379" font-family="Liberation Sans,sans-serif" font-weight="bold"><defs><filter id="lb"><feGaussianBlur stdDeviation=".6"/></filter><filter id="lb2"><feGaussianBlur stdDeviation="2.5"/></filter><linearGradient id="fur" x1="0" y1="0" x2="1" y2="0"><stop offset="0" stop-color="#f4ece2"/><stop offset=".5" stop-color="#f0e6da"/><stop offset="1" stop-color="#e9dccd"/></linearGradient></defs><path d="M1771 916C1760 945 1780 962 1812 958C1852 952 1882 912 1895 875L1892 873.5C1878 906 1850 940 1812 946C1792 948 1781 940 1784 922z" fill="#f6d3d3"/><path d="M1812 953C1850 948 1880 910 1893.5 874" fill="none" stroke="#fff" stroke-width="5" stroke-linecap="butt" opacity=".0"/><path d="M1783 709C1778 708 1775 709 1773.5 711L1766 727L1762.5 752L1756 771L1751.4 799L1749.6 832L1753 851L1766 887L1773 911L1778 921L1796 913L1822 891L1840.5 868L1844 851L1842.4 832L1833 806L1822 773L1814.5 756L1809 734L1793.5 710C1790 708 1786 708 1783 709z" fill="url(#fur)"/><path d="M1757 775L1768 782L1775 800L1795 812L1800 830L1795 850L1780 862L1762 860L1751 840L1751 805z" fill="#fbfaf8" filter="url(#lb)"/><path d="M1800 770C1815 800 1825 830 1830 860" stroke="#dccdbb" stroke-width="10" fill="none" opacity=".5" filter="url(#lb2)"/><path d="M1790 880C1800 885 1815 880 1825 870" stroke="#d8ccbc" stroke-width="10" fill="none" opacity=".5" filter="url(#lb2)"/><path d="M1763 771C1765 762 1774 757 1779 762C1781 768 1776 776 1768 777z" fill="#eaa9ac" filter="url(#lb)"/><path d="M1802 767C1804 758 1814 757 1819 765C1818 772 1810 775 1804 773z" fill="#eaa9ac" filter="url(#lb)"/><ellipse cx="1774.6" cy="734.5" rx="2.2" ry="3.8" fill="#111" transform="rotate(20 1774.6 734.5)"/><ellipse cx="1800.6" cy="732" rx="2.2" ry="4" fill="#111" transform="rotate(-25 1800.6 732)"/><ellipse cx="1743.5" cy="763.5" rx="8.2" ry="7.6" fill="#ff1493"/><path d="M1738.7 758.9L1720.8 756.5A1.3 1.3 0 0 0 1720.2 759.1L1737.3 765.1zM1741.8 756.7L1726.9 744.6A1.3 1.3 0 0 0 1725.1 746.4L1737.2 761.3zM1746.4 757.5L1741.3 738.1A1.3 1.3 0 0 0 1738.7 738.5L1739.6 758.5zM1749.9 761.3L1755.8 743.3A1.3 1.3 0 0 0 1753.4 742.3L1744.1 758.7z" fill="#ff1493"/><ellipse cx="1839.3" cy="763.5" rx="8.2" ry="7.6" fill="#00ffff"/><path d="M1838.9 758.6L1828.5 741.4A1.3 1.3 0 0 0 1826.1 742.6L1833.1 761.4zM1843.4 758.4L1844.0 737.7A1.3 1.3 0 0 0 1841.4 737.3L1836.6 757.6zM1846.0 761.2L1856.8 746.1A1.3 1.3 0 0 0 1854.8 744.3L1841.0 756.8zM1845.9 765.1L1861.4 758.4A1.3 1.3 0 0 0 1860.6 756.0L1844.1 758.9z" fill="#00ffff"/><path d="M1716 845L1728 838L1742 838L1749 850L1751.5 868L1748.5 880L1733 869L1720 857L1710 853z" fill="#ff0000"/><path d="M1723.7 846.6L1707.0 831.1A1.3 1.3 0 0 0 1705.0 832.9L1718.3 851.4z" fill="#ff0000"/><path d="M1730.1 843.1L1716.8 825.9A1.3 1.3 0 0 0 1714.6 827.3L1723.9 846.9z" fill="#ff0000"/><path d="M1737.4 840.8L1728.7 823.6A1.3 1.3 0 0 0 1726.3 824.4L1730.6 843.2z" fill="#ff0000"/><path d="M1745.4 845.6L1741.8 833.8A1.4 1.4 0 0 0 1739.0 834.2L1738.6 846.4z" fill="#ff0000"/><path d="M1720.8 852.1L1708.1 850.3A1.3 1.3 0 0 0 1707.5 852.9L1719.2 857.9z" fill="#ff0000"/><g transform="translate(-1 -1.5)"><path d=" M1883.0 845 L1871.0 838 L1857.0 838 L1850.0 850 L1847.5 868 L1850.5 880 L1866.0 869 L1879.0 857 L1889.0 853z" fill="#0000ff"/></g><path d="M1879.7 849.9L1893.0 831.4A1.3 1.3 0 0 0 1891.0 829.6L1874.3 845.1z" fill="#0000ff"/><path d="M1874.1 845.4L1883.4 825.8A1.3 1.3 0 0 0 1881.2 824.4L1867.9 841.6z" fill="#0000ff"/><path d="M1867.4 841.7L1871.7 822.9A1.3 1.3 0 0 0 1869.3 822.1L1860.6 839.3z" fill="#0000ff"/><path d="M1859.4 844.9L1859.0 832.7A1.4 1.4 0 0 0 1856.2 832.3L1852.6 844.1z" fill="#0000ff"/><path d="M1878.8 856.4L1890.5 851.4A1.3 1.3 0 0 0 1889.9 848.8L1877.2 850.6z" fill="#0000ff"/><circle cx="1783.5" cy="706.2" r="6.6" fill="#fff"/><circle cx="1783.5" cy="706.2" r="5.5" fill="#00ff00"/><circle cx="1778.7" cy="920.2" r="6.8" fill="#fff"/><circle cx="1778.7" cy="920.2" r="5.5" fill="#ffff00"/><text x="1707.5" y="698" font-size="16" fill="#ff1493" text-anchor="start" style="letter-spacing:0px">Front</text><text x="1707.5" y="716" font-size="16" fill="#ff1493" text-anchor="start" style="letter-spacing:0px">Left</text><text x="1707.5" y="734.5" font-size="16" fill="#ff1493" text-anchor="start" style="letter-spacing:0px">(A)</text><text x="1777.5" y="698" font-size="16" fill="#00ff00" text-anchor="start" style="letter-spacing:0px">Front</text><text x="1890.5" y="698" font-size="16" fill="#00ffff" text-anchor="end" style="letter-spacing:0px">Front</text><text x="1890.5" y="716" font-size="16" fill="#00ffff" text-anchor="end" style="letter-spacing:0px">Right</text><text x="1890.5" y="734.5" font-size="16" fill="#00ffff" text-anchor="end" style="letter-spacing:0px">(Z)</text><text x="1707.5" y="799.5" font-size="16" fill="#ff8000" text-anchor="start" style="letter-spacing:0px">Left</text><text x="1890.5" y="799.5" font-size="16" fill="#00bfff" text-anchor="end" style="letter-spacing:0px">Right</text><text x="1707.5" y="902.5" font-size="16" fill="#ff0000" text-anchor="start" style="letter-spacing:0.6px">Rear</text><text x="1707.5" y="921" font-size="16" fill="#ff0000" text-anchor="start" style="letter-spacing:0px">Left</text><text x="1707.5" y="939.5" font-size="16" fill="#ff0000" text-anchor="start" style="letter-spacing:0px">(Q)</text><text x="1890.5" y="902.5" font-size="16" fill="#0000ff" text-anchor="end" style="letter-spacing:0.6px">Rear</text><text x="1890.5" y="921" font-size="16" fill="#0000ff" text-anchor="end" style="letter-spacing:0px">Right</text><text x="1890.5" y="939.5" font-size="16" fill="#0000ff" text-anchor="end" style="letter-spacing:0px">(S)</text><text x="1779.5" y="979.5" font-size="16" fill="#ffd400" text-anchor="start" style="letter-spacing:0.6px">Rear</text><text x="1890" y="988.5" font-size="16" fill="#000" text-anchor="end" style="letter-spacing:-0.8px">Unknown</text><text x="1890.5" y="1006.5" font-size="16" fill="#4d1212" text-anchor="end" style="letter-spacing:0px">Unvalid (W)</text><text x="1890.5" y="1024.5" font-size="16" fill="#808080" text-anchor="end" style="letter-spacing:0px">Other (X)</text><text x="1707.5" y="1008.5" font-size="12.5" fill="#000" text-anchor="start" style="letter-spacing:0.3px">Undo: Ctrl+Z</text><text x="1707.5" y="1024.5" font-size="12.5" fill="#000" text-anchor="start" style="letter-spacing:0.45px">Redo: Ctrl+Y</text></svg>
</body></html>
